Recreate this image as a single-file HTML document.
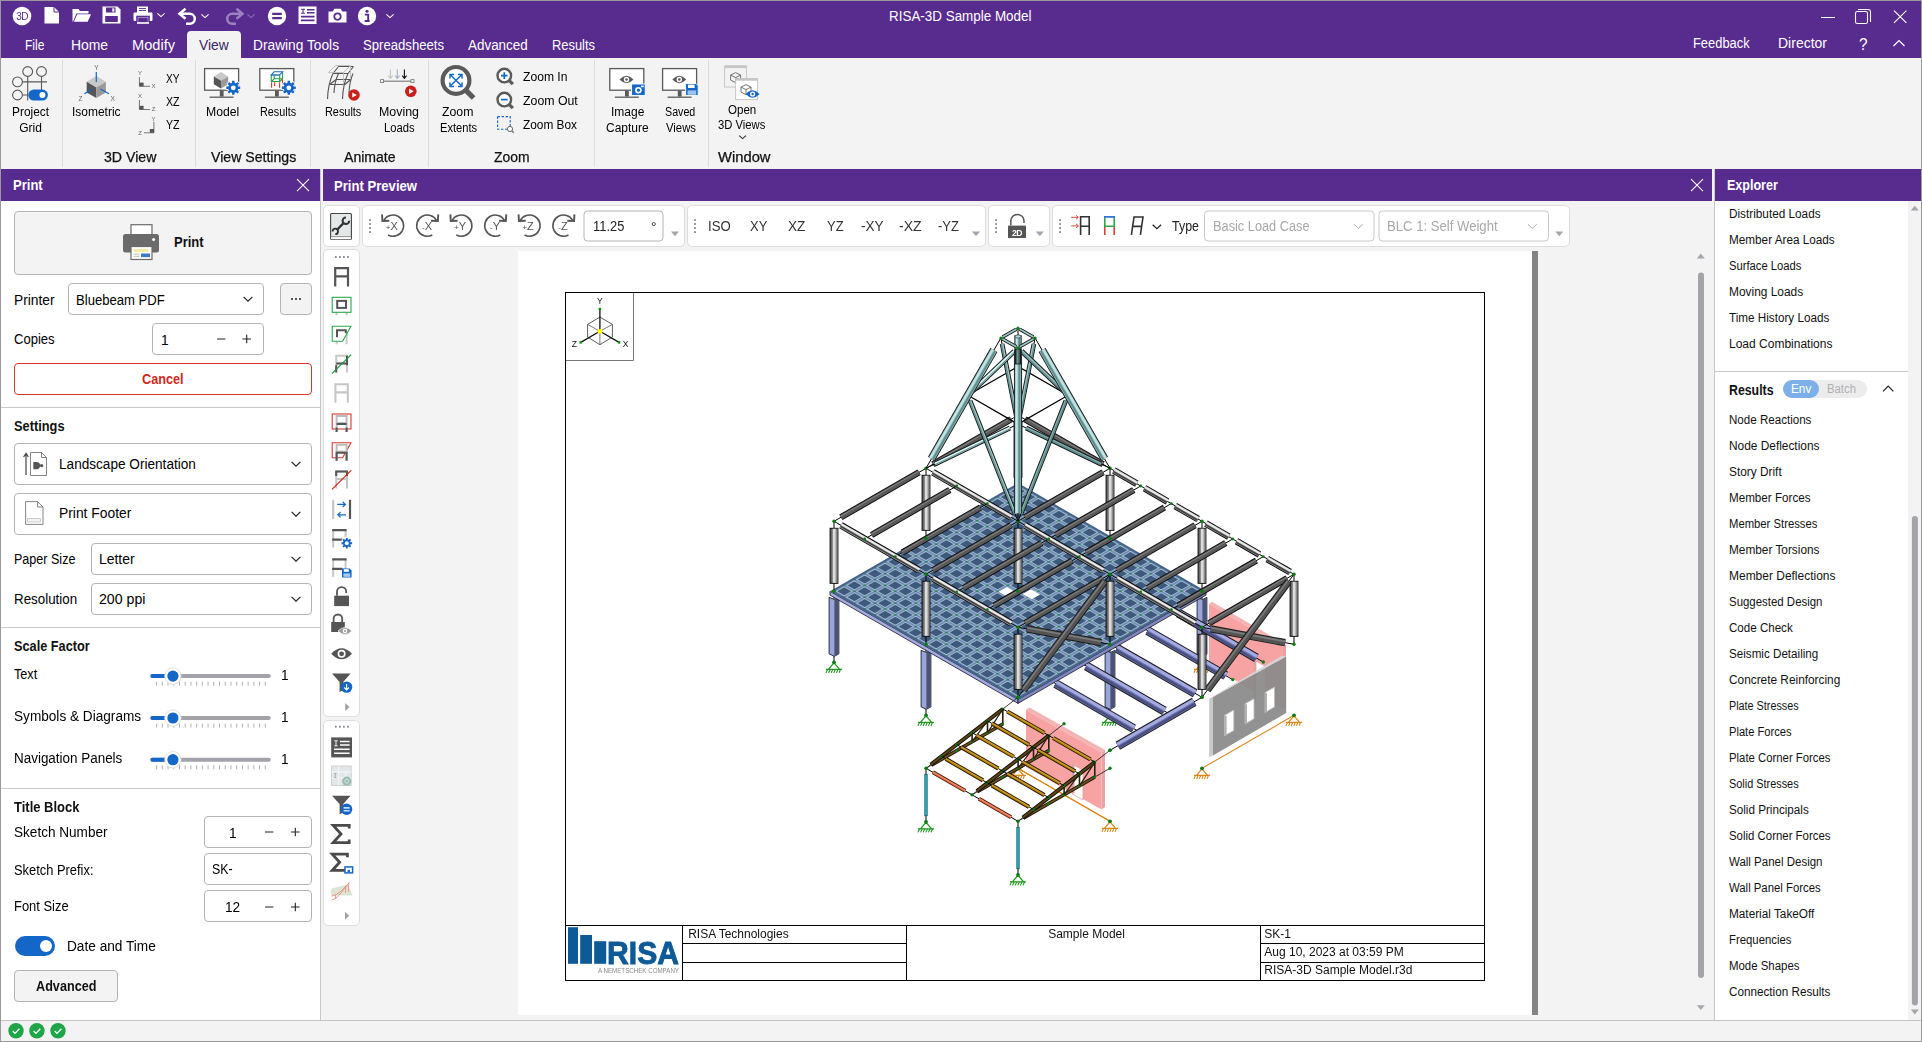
<!DOCTYPE html>
<html><head><meta charset="utf-8"><title>RISA-3D Sample Model</title><style>
html,body{margin:0;padding:0;}
body{width:1922px;height:1042px;overflow:hidden;background:#f3f3f3;position:relative;font-family:"Liberation Sans",sans-serif;}
.b{position:absolute;box-sizing:border-box;display:block;}
.t{position:absolute;white-space:nowrap;line-height:1;transform-origin:0 0;display:block;}
svg{overflow:visible;will-change:transform;}
svg text{font-family:"Liberation Sans",sans-serif;}
</style></head><body>
<div class="b" style="left:1px;top:1px;width:1920px;height:57px;background:#582c8f"></div>
<div class="b" style="left:187px;top:31px;width:54px;height:28px;background:#f3f3f3;border-radius:4px 4px 0 0"></div>
<svg class="b" style="left:12px;top:6px;" width="20" height="20" viewBox="0 0 20 20"><circle cx="10" cy="10" r="9.3" fill="#fff"/><text x="10" y="13.6" font-size="10" text-anchor="middle" fill="#582c8f" font-family="Liberation Sans, sans-serif" letter-spacing="-0.6">3D</text></svg>
<svg class="b" style="left:44px;top:6px;" width="16" height="18" viewBox="0 0 16 18"><path d="M0.5 1h9.5l5 5v11.5h-14.5z" fill="#fff"/><path d="M10 1v5h5" fill="none" stroke="#582c8f" stroke-width="1"/></svg>
<svg class="b" style="left:72px;top:8px;" width="20" height="15" viewBox="0 0 20 15"><path d="M0.5 13.5v-12.5h6l1.5 2h8.5v2.5h-12l-3.5 8z" fill="#fff"/><path d="M5.3 6.3h13.7l-3.3 7.5h-13.9z" fill="#fff"/></svg>
<svg class="b" style="left:102px;top:6px;" width="19" height="18" viewBox="0 0 19 18"><path d="M0.5 0.5h15l3 3v14h-18z" fill="#fff"/><rect x="4" y="1.5" width="9.5" height="5" fill="#582c8f"/><rect x="10.3" y="2.3" width="2" height="3.4" fill="#fff"/><rect x="3.2" y="10" width="12.6" height="6" fill="#582c8f"/></svg>
<svg class="b" style="left:133px;top:6px;" width="20" height="18" viewBox="0 0 20 18"><rect x="4" y="0.5" width="11" height="7" fill="#fff"/><path d="M6 2.5h7M6 4.5h7" stroke="#582c8f" stroke-width="0.9"/><rect x="0.5" y="6.5" width="19" height="8.5" rx="1.2" fill="#fff"/><rect x="4" y="10.5" width="12" height="7" fill="#fff" stroke="#582c8f" stroke-width="1.6"/><rect x="5.2" y="11.6" width="9.6" height="5.2" fill="#582c8f"/><rect x="4" y="16.2" width="12" height="1.6" fill="#fff"/></svg>
<svg class="b" style="left:155.3px;top:9.3px;" width="12" height="12" viewBox="0 0 12 12"><path d="M2.4 4.4L6 7.6L9.6 4.4" fill="none" stroke="#fff" stroke-width="1.1"/></svg>
<svg class="b" style="left:178px;top:8px;" width="20" height="18" viewBox="0 0 20 18"><path d="M7.5 0.8L1.5 5.8l6 5" fill="none" stroke="#fff" stroke-width="2.5"/><path d="M2.5 5.8h9.3a5 5 0 0 1 0 10h-3.8" fill="none" stroke="#fff" stroke-width="2.5"/></svg>
<svg class="b" style="left:199.3px;top:10.3px;" width="12" height="12" viewBox="0 0 12 12"><path d="M2.4 4.4L6 7.6L9.6 4.4" fill="none" stroke="#fff" stroke-width="1.1"/></svg>
<svg class="b" style="left:224px;top:8px;" width="20" height="18" viewBox="0 0 20 18"><path d="M12.5 0.8l6 5l-6 5" fill="none" stroke="#9b82bf" stroke-width="2.5"/><path d="M17.5 5.8h-9.3a5 5 0 0 0 0 10h3.8" fill="none" stroke="#9b82bf" stroke-width="2.5"/></svg>
<svg class="b" style="left:245.3px;top:10.3px;" width="12" height="12" viewBox="0 0 12 12"><path d="M2.4 4.4L6 7.6L9.6 4.4" fill="none" stroke="#8a70b2" stroke-width="1.1"/></svg>
<svg class="b" style="left:267px;top:6px;" width="20" height="20" viewBox="0 0 20 20"><circle cx="10" cy="10" r="9.2" fill="#fff"/><path d="M5.2 7.8h9.6M5.2 12.2h9.6" stroke="#582c8f" stroke-width="2.2"/></svg>
<svg class="b" style="left:298px;top:6px;" width="19" height="19" viewBox="0 0 19 19"><rect x="0.5" y="0.5" width="18" height="17.5" fill="#fff"/><path d="M3 3.2h4M3 7.2h4M5 3.2v4" stroke="#582c8f" stroke-width="1.1"/><path d="M9 3.8h7.5M9 6.8h7.5M3 10.6h13.5M3 14.4h13.5" stroke="#582c8f" stroke-width="1.6"/></svg>
<svg class="b" style="left:328px;top:8px;" width="19" height="15" viewBox="0 0 19 15"><path d="M0.5 3.5h4.2l1.6-2.8h6.4l1.6 2.8h4.2v11h-18z" fill="#fff"/><circle cx="9.5" cy="8.6" r="4.1" fill="#582c8f"/><circle cx="9.5" cy="8.6" r="2.3" fill="#fff"/></svg>
<svg class="b" style="left:357px;top:6px;" width="20" height="20" viewBox="0 0 20 20"><circle cx="10" cy="10" r="9.2" fill="#fff"/><circle cx="10" cy="5.3" r="1.5" fill="#582c8f"/><path d="M7.8 8.6h3.4v6.2M7.6 15h5" stroke="#582c8f" stroke-width="1.9" fill="none"/></svg>
<svg class="b" style="left:384.3px;top:10px;" width="12" height="12" viewBox="0 0 12 12"><path d="M2.4 4.4L6 7.6L9.6 4.4" fill="none" stroke="#fff" stroke-width="1.1"/></svg>
<span class="t" style="left:889.0px;top:9.1px;font-size:14px;color:#fff;transform:scaleX(0.9588);">RISA-3D Sample Model</span>
<svg class="b" style="left:1818px;top:8px;" width="20" height="18" viewBox="0 0 20 18"><path d="M3 9.5h14" stroke="#fff" stroke-width="1"/></svg>
<svg class="b" style="left:1853px;top:7px;" width="20" height="18" viewBox="0 0 20 18"><rect x="2.5" y="4.5" width="12" height="12" rx="1.8" fill="none" stroke="#fff" stroke-width="1.1"/><path d="M5 2.5h10.2a2.3 2.3 0 0 1 2.3 2.3v10.2" fill="none" stroke="#fff" stroke-width="1.1"/></svg>
<svg class="b" style="left:1890px;top:7px;" width="20" height="18" viewBox="0 0 20 18"><path d="M4 3.7l12.4 12.2M16.4 3.7l-12.4 12.2" stroke="#fff" stroke-width="1.1"/></svg>
<span class="t" style="left:25.3px;top:38.4px;font-size:14px;color:#fff;transform:scaleX(0.8601);">File</span>
<span class="t" style="left:71.3px;top:38.4px;font-size:14px;color:#fff;transform:scaleX(0.9908);">Home</span>
<span class="t" style="left:132.3px;top:38.4px;font-size:14px;color:#fff;transform:scaleX(1.0428);">Modify</span>
<span class="t" style="left:199.3px;top:38.4px;font-size:14px;color:#3d2466;transform:scaleX(0.9870);">View</span>
<span class="t" style="left:253.3px;top:38.4px;font-size:14px;color:#fff;transform:scaleX(0.9810);">Drawing Tools</span>
<span class="t" style="left:363.3px;top:38.4px;font-size:14px;color:#fff;transform:scaleX(0.9376);">Spreadsheets</span>
<span class="t" style="left:468.3px;top:38.4px;font-size:14px;color:#fff;transform:scaleX(0.9588);">Advanced</span>
<span class="t" style="left:552.3px;top:38.4px;font-size:14px;color:#fff;transform:scaleX(0.9212);">Results</span>
<span class="t" style="left:1693.3px;top:36.4px;font-size:14px;color:#fff;transform:scaleX(0.9207);">Feedback</span>
<span class="t" style="left:1778.2px;top:36.4px;font-size:14px;color:#fff;transform:scaleX(0.9998);">Director</span>
<span class="t" style="left:1858.7px;top:35.6px;font-size:17px;color:#fff;transform:scaleX(0.9000);">?</span>
<svg class="b" style="left:1892px;top:37px;" width="14" height="12" viewBox="0 0 14 12"><path d="M1.5 9L7 3.5L12.5 9" fill="none" stroke="#fff" stroke-width="1.2"/></svg>
<div class="b" style="left:1px;top:58px;width:1920px;height:110.5px;background:#f3f3f3"></div>
<div class="b" style="left:62px;top:60px;width:1px;height:107px;background:#dcdcdc"></div>
<div class="b" style="left:195px;top:60px;width:1px;height:107px;background:#dcdcdc"></div>
<div class="b" style="left:310px;top:60px;width:1px;height:107px;background:#dcdcdc"></div>
<div class="b" style="left:428px;top:60px;width:1px;height:107px;background:#dcdcdc"></div>
<div class="b" style="left:594px;top:60px;width:1px;height:107px;background:#dcdcdc"></div>
<div class="b" style="left:708px;top:60px;width:1px;height:107px;background:#dcdcdc"></div>
<svg class="b" style="left:0px;top:0px;" width="800" height="170" viewBox="0 0 800 170"><g fill="none" stroke="#5a5a5a" stroke-width="1.1"><circle cx="27.7" cy="71.5" r="4.9"/><circle cx="41.5" cy="71.5" r="4.9"/><circle cx="17.5" cy="81.9" r="4.9"/><circle cx="17.5" cy="95" r="4.9"/><path d="M27.7 76.4V100.5M41.5 76.4V90M22.4 81.9H47M22.4 95H28.5"/></g><rect x="28.3" y="89.6" width="19.6" height="11" rx="5.5" fill="#1467c8"/><circle cx="42.4" cy="95.1" r="3" fill="#fff"/><polygon points="96.3,76.0 105.9,81.8 96.3,87.6 86.7,81.8" fill="#c9c9c9"/><polygon points="86.7,81.8 96.3,87.6 96.3,98.1 86.7,92.4" fill="#555"/><polygon points="96.3,87.6 105.9,81.8 105.9,92.4 96.3,98.1" fill="#9a9a9a"/><path d="M96.3 71.9V81.9M92.4 89L84.4 93.8M100.4 89L109 93.8" stroke="#1467c8" stroke-width="1.2"/><text x="96.3" y="70.3" font-size="6.5" fill="#666" text-anchor="middle" font-family="Liberation Sans, sans-serif">Y</text><text x="80.6" y="101" font-size="6.5" fill="#666" text-anchor="middle" font-family="Liberation Sans, sans-serif">Z</text><text x="112.6" y="101" font-size="6.5" fill="#666" text-anchor="middle" font-family="Liberation Sans, sans-serif">X</text><g stroke="#777" stroke-width="1" fill="none"><path d="M139.4 77V86.3H150"/><path d="M139.4 100V109.5H150"/><path d="M153.9 121.8V132.8H144"/></g><rect x="139.4" y="82.6" width="4.2" height="3.7" fill="#555"/><rect x="139.4" y="105.8" width="4.2" height="3.7" fill="#555"/><rect x="149.8" y="129" width="4.2" height="3.8" fill="#555"/><text x="140" y="75.2" font-size="6" fill="#666" text-anchor="middle" font-family="Liberation Sans, sans-serif">Y</text><text x="153.6" y="88.2" font-size="6" fill="#666" text-anchor="middle" font-family="Liberation Sans, sans-serif">X</text><text x="140" y="98.3" font-size="6" fill="#666" text-anchor="middle" font-family="Liberation Sans, sans-serif">X</text><text x="153.6" y="111.3" font-size="6" fill="#666" text-anchor="middle" font-family="Liberation Sans, sans-serif">Z</text><text x="153.6" y="120.5" font-size="6" fill="#666" text-anchor="middle" font-family="Liberation Sans, sans-serif">Y</text><text x="140" y="134.8" font-size="6" fill="#666" text-anchor="middle" font-family="Liberation Sans, sans-serif">Z</text><rect x="204.6" y="68.6" width="34" height="21.6" fill="#fff" stroke="#5a5a5a" stroke-width="1.3"/><rect x="219.79999999999998" y="90.6" width="3.8" height="6" fill="#5a5a5a"/><path d="M209.6 97.2h24" stroke="#5a5a5a" stroke-width="1.3"/><polygon points="221.0,72.1 228.2,76.4 221.0,80.7 213.8,76.4" fill="#c9c9c9"/><polygon points="213.8,76.4 221.0,80.7 221.0,88.6 213.8,84.3" fill="#555"/><polygon points="221.0,80.7 228.2,76.4 228.2,84.3 221.0,88.6" fill="#9a9a9a"/><path d="M240.29 86.58L240.29 89.02L238.25 89.07L237.70 90.40L239.11 91.88L237.38 93.61L235.90 92.20L234.57 92.75L234.52 94.79L232.08 94.79L232.03 92.75L230.70 92.20L229.22 93.61L227.49 91.88L228.90 90.40L228.35 89.07L226.31 89.02L226.31 86.58L228.35 86.53L228.90 85.20L227.49 83.72L229.22 81.99L230.70 83.40L232.03 82.85L232.08 80.81L234.52 80.81L234.57 82.85L235.90 83.40L237.38 81.99L239.11 83.72L237.70 85.20L238.25 86.53Z" fill="#1467c8" stroke="#fff" stroke-width="1.6" paint-order="stroke"/><circle cx="233.3" cy="87.8" r="2.4" fill="#fff"/><rect x="259.8" y="68.6" width="34" height="21.6" fill="#fff" stroke="#5a5a5a" stroke-width="1.3"/><rect x="275.0" y="90.6" width="3.8" height="6" fill="#5a5a5a"/><path d="M264.8 97.2h24" stroke="#5a5a5a" stroke-width="1.3"/><g fill="none" stroke-width="1.1"><path d="M274.2 72.2h8.4v6.6h-8.4zM271.3 74.9h8.4v6.6h-8.4zM271.3 81.5l2.9-2.7M279.7 81.5l2.9-2.7" stroke="#2aa04a"/><path d="M271.3 74.9l2.9-3.1h8.4l-2.9 3.1z" stroke="#2d6fd0" fill="#fff"/><path d="M271.6 82.3v5.4M274.6 82.3v3.6M279.6 82.3v5.4M282.5 79.6v4.6" stroke="#d63a2f"/></g><path d="M295.79 86.58L295.79 89.02L293.75 89.07L293.20 90.40L294.61 91.88L292.88 93.61L291.40 92.20L290.07 92.75L290.02 94.79L287.58 94.79L287.53 92.75L286.20 92.20L284.72 93.61L282.99 91.88L284.40 90.40L283.85 89.07L281.81 89.02L281.81 86.58L283.85 86.53L284.40 85.20L282.99 83.72L284.72 81.99L286.20 83.40L287.53 82.85L287.58 80.81L290.02 80.81L290.07 82.85L291.40 83.40L292.88 81.99L294.61 83.72L293.20 85.20L293.75 86.53Z" fill="#1467c8" stroke="#fff" stroke-width="1.6" paint-order="stroke"/><circle cx="288.8" cy="87.8" r="2.4" fill="#fff"/><g fill="none" stroke="#555" stroke-width="1.1"><path d="M327.5 99c0.3-9 1.5-17 5.5-25.5M334 93c0.3-7 1.2-12.5 4.5-19.5M342.5 99c0.3-9 1.5-17 5.5-25.5M349 93c0.3-7 1-12.5 4-19.5"/><path d="M333 73.5h15M338.5 66.5h15M333 73.5l5.5-7M348 73.5l5.5-7M329.8 84.5h15.2M336 79.5h14.5M329.8 84.5l6.2-5M345 84.5l5.5-5"/></g><g fill="none" stroke="#bbb" stroke-width="0.9"><path d="M328.5 72.5h15v12M328.5 72.5l7-7h15l-7 7M350.5 65.5v12"/></g><circle cx="354" cy="95" r="5.8" fill="#c8201c"/><path d="M352.3 92.4L356.8 95L352.3 97.6Z" fill="#fff"/><path d="M382 81.2h30.5" stroke="#777" stroke-width="1.1"/><rect x="380.6" y="79.6" width="3" height="3" fill="#f3f3f3" stroke="#777" stroke-width="0.8"/><rect x="411" y="79.6" width="3" height="3" fill="#f3f3f3" stroke="#777" stroke-width="0.8"/><path d="M390.4 69.5V78M388.2 75.6L390.4 78.4L392.59999999999997 75.6" stroke="#c4c4c8" stroke-width="1.1" fill="none"/><path d="M397.3 69.5V78M395.1 75.6L397.3 78.4L399.5 75.6" stroke="#a9afc4" stroke-width="1.1" fill="none"/><path d="M404.4 69.5V78M402.2 75.6L404.4 78.4L406.59999999999997 75.6" stroke="#111" stroke-width="1.1" fill="none"/><circle cx="410.8" cy="91.3" r="5.8" fill="#c8201c"/><path d="M409.1 88.7L413.6 91.3L409.1 93.89999999999999Z" fill="#fff"/><circle cx="456" cy="80.4" r="13.4" fill="#fff" stroke="#5a5a5a" stroke-width="4.2"/><path d="M466.2 90.6L473.6 98.0" stroke="#5a5a5a" stroke-width="5.25"/><g stroke="#1467c8" stroke-width="1.5" fill="none"><path d="M450.6 75L461.4 85.8M461.4 75L450.6 85.8"/><path d="M450 78.4V74.4H454M458 74.4H462V78.4M462 82.4V86.4H458M454 86.4H450V82.4"/></g><circle cx="504.3" cy="75.6" r="6.8" fill="#fff" stroke="#5a5a5a" stroke-width="2.4"/><path d="M509.5 80.8L512.9 84.2" stroke="#5a5a5a" stroke-width="3.2"/><path d="M501 75.6h6.6M504.3 72.3v6.6" stroke="#1467c8" stroke-width="1.7"/><circle cx="504.3" cy="99.6" r="6.8" fill="#fff" stroke="#5a5a5a" stroke-width="2.4"/><path d="M509.5 104.8L512.9 108.2" stroke="#5a5a5a" stroke-width="3.2"/><path d="M501 99.6h6.6" stroke="#1467c8" stroke-width="1.7"/><rect x="497.6" y="116.6" width="12.6" height="12.6" fill="none" stroke="#1467c8" stroke-width="1.1" stroke-dasharray="2.4 1.6"/><circle cx="510" cy="129" r="2.6" fill="#fff" stroke="#666" stroke-width="1"/><path d="M512.0 131.0L513.7 132.7" stroke="#666" stroke-width="1.25"/><rect x="609.8" y="68.6" width="34" height="21.6" fill="#fff" stroke="#5a5a5a" stroke-width="1.3"/><rect x="625.0" y="90.6" width="3.8" height="6" fill="#5a5a5a"/><path d="M614.8 97.2h24" stroke="#5a5a5a" stroke-width="1.3"/><path d="M619.5 79.5q7 -7.4 14 0q-7 7.4 -14 0z" fill="#5a5a5a"/><circle cx="626.5" cy="79.5" r="2.7" fill="#fff"/><circle cx="626.5" cy="79.5" r="1.3" fill="#5a5a5a"/><rect x="631.6" y="84" width="13.6" height="11.4" fill="#1467c8" stroke="#fff" stroke-width="0.9"/><circle cx="638.4" cy="90.2" r="3.3" fill="#fff"/><circle cx="638.4" cy="90.2" r="1.6" fill="#1467c8"/><rect x="641" y="85.6" width="2.8" height="1.6" fill="#fff"/><rect x="662.6" y="68.6" width="34" height="21.6" fill="#fff" stroke="#5a5a5a" stroke-width="1.3"/><rect x="677.8000000000001" y="90.6" width="3.8" height="6" fill="#5a5a5a"/><path d="M667.6 97.2h24" stroke="#5a5a5a" stroke-width="1.3"/><path d="M672.3 79.5q7 -7.4 14 0q-7 7.4 -14 0z" fill="#5a5a5a"/><circle cx="679.3" cy="79.5" r="2.7" fill="#fff"/><circle cx="679.3" cy="79.5" r="1.3" fill="#5a5a5a"/><path d="M685.6 83.5h10.4l2.2 2.2v9.8h-12.6z" fill="#1467c8" stroke="#fff" stroke-width="0.9"/><rect x="688" y="84.6" width="6.6" height="3.4" fill="#fff"/><rect x="687.6" y="90.4" width="8.6" height="4.4" fill="#9cc3ee"/><rect x="724.6" y="66" width="22" height="21" fill="#f3f3f3" stroke="#c6c6c6" stroke-width="1"/><rect x="724.6" y="65.5" width="22" height="2.6" fill="#c6c6c6"/><g fill="none" stroke="#666" stroke-width="0.9"><path d="M735.6 72.6l5 2.5v5l-5 2.5l-5 -2.5v-5z"/><path d="M730.6 75.1l5 2.5l5 -2.5M735.6 77.6v5"/></g><rect x="735.6" y="78.6" width="22" height="21" fill="#fff" stroke="#c6c6c6" stroke-width="1"/><rect x="735.6" y="78.1" width="22" height="2.6" fill="#c6c6c6"/><g fill="none" stroke="#666" stroke-width="0.9"><path d="M746 84.6l5 2.5v5l-5 2.5l-5 -2.5v-5z"/><path d="M741 87.1l5 2.5l5 -2.5M746 89.6v5"/></g><path d="M745.6 94q7 -7.4 14 0q-7 7.4 -14 0z" fill="#1467c8"/><circle cx="752.6" cy="94" r="2.6" fill="#fff"/><circle cx="752.6" cy="94" r="1.2" fill="#1467c8"/><path d="M739.2 135.6l3.4 3l3.4 -3" fill="none" stroke="#333" stroke-width="1.1"/></svg>
<span class="t" style="left:12.0px;top:105.5px;font-size:12px;color:#000;transform:scaleX(0.9905);">Project</span>
<span class="t" style="left:19.2px;top:121.5px;font-size:12px;color:#000;transform:scaleX(1.0000);">Grid</span>
<span class="t" style="left:72.0px;top:105.5px;font-size:12px;color:#000;transform:scaleX(0.9983);">Isometric</span>
<span class="t" style="left:206.3px;top:105.5px;font-size:12px;color:#000;transform:scaleX(1.0186);">Model</span>
<span class="t" style="left:259.6px;top:105.5px;font-size:12px;color:#000;transform:scaleX(0.9020);">Results</span>
<span class="t" style="left:325.4px;top:105.6px;font-size:12px;color:#000;transform:scaleX(0.9070);">Results</span>
<span class="t" style="left:378.6px;top:105.6px;font-size:12px;color:#000;transform:scaleX(1.0338);">Moving</span>
<span class="t" style="left:383.5px;top:121.5px;font-size:12px;color:#000;transform:scaleX(0.9357);">Loads</span>
<span class="t" style="left:442.0px;top:105.6px;font-size:12px;color:#000;transform:scaleX(1.0235);">Zoom</span>
<span class="t" style="left:439.5px;top:121.5px;font-size:12px;color:#000;transform:scaleX(0.9294);">Extents</span>
<span class="t" style="left:610.6px;top:105.6px;font-size:12px;color:#000;transform:scaleX(1.0012);">Image</span>
<span class="t" style="left:606.0px;top:121.5px;font-size:12px;color:#000;transform:scaleX(0.9976);">Capture</span>
<span class="t" style="left:665.4px;top:105.6px;font-size:12px;color:#000;transform:scaleX(0.8904);">Saved</span>
<span class="t" style="left:666.0px;top:121.5px;font-size:12px;color:#000;transform:scaleX(0.9434);">Views</span>
<span class="t" style="left:728.4px;top:104.0px;font-size:12px;color:#000;transform:scaleX(0.9638);">Open</span>
<span class="t" style="left:718.0px;top:119.0px;font-size:12px;color:#000;transform:scaleX(0.9370);">3D Views</span>
<span class="t" style="left:166.2px;top:72.5px;font-size:12px;color:#000;transform:scaleX(0.8496);">XY</span>
<span class="t" style="left:166.2px;top:95.5px;font-size:12px;color:#000;transform:scaleX(0.8868);">XZ</span>
<span class="t" style="left:166.2px;top:118.5px;font-size:12px;color:#000;transform:scaleX(0.8868);">YZ</span>
<span class="t" style="left:523.0px;top:71.2px;font-size:12px;color:#000;transform:scaleX(1.0107);">Zoom In</span>
<span class="t" style="left:523.0px;top:95.3px;font-size:12px;color:#000;transform:scaleX(1.0269);">Zoom Out</span>
<span class="t" style="left:523.0px;top:119.4px;font-size:12px;color:#000;transform:scaleX(0.9873);">Zoom Box</span>
<span class="t" style="left:103.6px;top:149.8px;font-size:14px;color:#111;transform:scaleX(1.0101);-webkit-text-stroke:0.25px #111;">3D View</span>
<span class="t" style="left:210.9px;top:149.8px;font-size:14px;color:#111;transform:scaleX(1.0075);-webkit-text-stroke:0.25px #111;">View Settings</span>
<span class="t" style="left:344.4px;top:149.8px;font-size:14px;color:#111;transform:scaleX(1.0047);-webkit-text-stroke:0.25px #111;">Animate</span>
<span class="t" style="left:494.0px;top:149.8px;font-size:14px;color:#111;transform:scaleX(0.9920);-webkit-text-stroke:0.25px #111;">Zoom</span>
<span class="t" style="left:717.5px;top:149.8px;font-size:14px;color:#111;transform:scaleX(1.0544);-webkit-text-stroke:0.25px #111;">Window</span>
<div class="b" style="left:1px;top:169px;width:320px;height:851px;background:#fff;border-right:1px solid #c8c8c8"></div>
<div class="b" style="left:1px;top:169px;width:319px;height:32px;background:#582c8f"></div>
<span class="t" style="left:13.3px;top:177.9px;font-size:14px;color:#fff;transform:scaleX(0.9312);font-weight:bold;">Print</span>
<svg class="b" style="left:296px;top:178px;" width="14" height="14" viewBox="0 0 14 14"><path d="M1 1.2l12 12M13 1.2l-12 12" stroke="#fff" stroke-width="1.1"/></svg>
<div class="b" style="left:14px;top:211px;width:298px;height:64px;background:#f3f3f3;border:1px solid #b4b4b4;border-radius:4px"></div>
<svg class="b" style="left:123.3px;top:224px;" width="36" height="36" viewBox="0 0 36 36"><rect x="8" y="0.7" width="21" height="10" fill="#fff" stroke="#6b6b6b" stroke-width="1.2"/><rect x="0" y="10" width="36" height="18.5" rx="2.5" fill="#6b6b6b"/><circle cx="30.6" cy="15.6" r="1.5" fill="#fff"/><rect x="8" y="22.5" width="21" height="13" fill="#fff" stroke="#6b6b6b" stroke-width="1.2"/><rect x="10.5" y="25" width="15" height="3" fill="#f2eda0"/><rect x="10.5" y="29.5" width="6" height="1" fill="#bbb"/><rect x="10.5" y="31.8" width="6" height="1" fill="#bbb"/><rect x="18" y="29.5" width="9" height="3.6" fill="#3b79c9"/></svg>
<span class="t" style="left:173.6px;top:235.4px;font-size:14px;color:#111;transform:scaleX(0.9281);font-weight:bold;">Print</span>
<span class="t" style="left:14.3px;top:292.7px;font-size:14px;color:#000;transform:scaleX(0.9845);">Printer</span>
<div class="b" style="left:68px;top:283px;width:196px;height:32px;background:#fff;border:1px solid #b4b4b4;border-radius:4px"></div>
<span class="t" style="left:76.2px;top:292.7px;font-size:14px;color:#000;transform:scaleX(0.9354);">Bluebeam PDF</span>
<svg class="b" style="left:240.8px;top:292.3px;" width="14" height="14" viewBox="0 0 14 14"><path d="M2.5999999999999996 4.9L7 9.1L11.4 4.9" fill="none" stroke="#222" stroke-width="1.2"/></svg>
<div class="b" style="left:280px;top:283px;width:32px;height:32px;background:#f3f3f3;border:1px solid #b4b4b4;border-radius:4px"></div>
<svg class="b" style="left:289px;top:296px;" width="14" height="6" viewBox="0 0 14 6"><circle cx="3" cy="3" r="1" fill="#222"/><circle cx="7" cy="3" r="1" fill="#222"/><circle cx="11" cy="3" r="1" fill="#222"/></svg>
<span class="t" style="left:14.3px;top:331.9px;font-size:14px;color:#000;transform:scaleX(0.9317);">Copies</span>
<div class="b" style="left:152px;top:323px;width:112px;height:32px;background:#fff;border:1px solid #b4b4b4;border-radius:4px"></div>
<span class="t" style="left:160.8px;top:332.6px;font-size:14px;color:#000;transform:scaleX(0.9750);">1</span>
<svg class="b" style="left:215px;top:333px;" width="40" height="12" viewBox="0 0 40 12"><path d="M2 6h8.4M27.4 6h8.6M31.7 1.7v8.6" stroke="#222" stroke-width="1.1"/></svg>
<div class="b" style="left:14px;top:363px;width:298px;height:32px;background:#fff;border:1px solid #d9362b;border-radius:4px"></div>
<span class="t" style="left:142.2px;top:371.8px;font-size:14px;color:#d3271c;transform:scaleX(0.9062);font-weight:bold;">Cancel</span>
<div class="b" style="left:1px;top:407.2px;width:319px;height:1px;background:#c8c8c8"></div>
<span class="t" style="left:14.3px;top:419.1px;font-size:14px;color:#111;transform:scaleX(0.9144);font-weight:bold;">Settings</span>
<div class="b" style="left:14px;top:443px;width:298px;height:42px;background:#fff;border:1px solid #b4b4b4;border-radius:4px"></div>
<svg class="b" style="left:22.5px;top:450.5px;" width="26" height="26" viewBox="0 0 26 26"><path d="M3 3v21M0.6 6L3 2.4L5.4 6" stroke="#444" stroke-width="1.2" fill="none"/><path d="M7.5 1.5h11l5 5v18h-16z" fill="#fff" stroke="#777" stroke-width="0.9"/><path d="M18.5 1.5v5h5" fill="none" stroke="#777" stroke-width="0.9"/><path d="M10.3 11h3.2a3.6 3.6 0 0 1 0 7.2h-3.2z" fill="#555"/><circle cx="18.6" cy="14.6" r="1.7" fill="#555"/></svg>
<span class="t" style="left:58.5px;top:456.5px;font-size:14px;color:#000;transform:scaleX(0.9718);">Landscape Orientation</span>
<svg class="b" style="left:288.7px;top:457px;" width="14" height="14" viewBox="0 0 14 14"><path d="M2.5999999999999996 4.9L7 9.1L11.4 4.9" fill="none" stroke="#222" stroke-width="1.2"/></svg>
<div class="b" style="left:14px;top:493px;width:298px;height:42px;background:#fff;border:1px solid #b4b4b4;border-radius:4px"></div>
<svg class="b" style="left:25px;top:501.3px;" width="19" height="24.5" viewBox="0 0 19 24.5"><path d="M0.6 0.6h12l5.4 5.4v17.4h-17.4z" fill="#fff" stroke="#777" stroke-width="0.9"/><path d="M12.6 0.6v5.4h5.4" fill="none" stroke="#777" stroke-width="0.9"/><rect x="2.6" y="17.4" width="13" height="3.6" fill="#f3f3f3" stroke="#bbb" stroke-width="0.7"/></svg>
<span class="t" style="left:58.5px;top:506.1px;font-size:14px;color:#000;transform:scaleX(0.9885);">Print Footer</span>
<svg class="b" style="left:288.7px;top:507px;" width="14" height="14" viewBox="0 0 14 14"><path d="M2.5999999999999996 4.9L7 9.1L11.4 4.9" fill="none" stroke="#222" stroke-width="1.2"/></svg>
<span class="t" style="left:14.3px;top:551.8px;font-size:14px;color:#000;transform:scaleX(0.8966);">Paper Size</span>
<div class="b" style="left:91px;top:543px;width:221px;height:32px;background:#fff;border:1px solid #b4b4b4;border-radius:4px"></div>
<span class="t" style="left:99.4px;top:551.8px;font-size:14px;color:#000;transform:scaleX(0.9944);">Letter</span>
<svg class="b" style="left:288.7px;top:552px;" width="14" height="14" viewBox="0 0 14 14"><path d="M2.5999999999999996 4.9L7 9.1L11.4 4.9" fill="none" stroke="#222" stroke-width="1.2"/></svg>
<span class="t" style="left:14.3px;top:591.9px;font-size:14px;color:#000;transform:scaleX(0.9540);">Resolution</span>
<div class="b" style="left:91px;top:583px;width:221px;height:32px;background:#fff;border:1px solid #b4b4b4;border-radius:4px"></div>
<span class="t" style="left:99.4px;top:591.9px;font-size:14px;color:#000;transform:scaleX(1.0103);">200 ppi</span>
<svg class="b" style="left:288.7px;top:592.3px;" width="14" height="14" viewBox="0 0 14 14"><path d="M2.5999999999999996 4.9L7 9.1L11.4 4.9" fill="none" stroke="#222" stroke-width="1.2"/></svg>
<div class="b" style="left:1px;top:627.2px;width:319px;height:1px;background:#c8c8c8"></div>
<span class="t" style="left:14.3px;top:639.1px;font-size:14px;color:#111;transform:scaleX(0.9092);font-weight:bold;">Scale Factor</span>
<span class="t" style="left:14.3px;top:667.3px;font-size:14px;color:#000;transform:scaleX(0.9036);">Text</span>
<svg class="b" style="left:0px;top:0px;" width="320" height="1042" viewBox="0 0 320 1042"><rect x="150.4" y="674.1" width="120.4" height="4" rx="2" fill="#a3a3a9"/><rect x="150.4" y="674.1" width="22" height="4" rx="2" fill="#1467c8"/><path d="M156.60 681.7v4M162.32 681.7v4M168.04 681.7v4M173.76 681.7v4M179.48 681.7v4M185.21 681.7v4M190.93 681.7v4M196.65 681.7v4M202.37 681.7v4M208.09 681.7v4M213.81 681.7v4M219.53 681.7v4M225.25 681.7v4M230.97 681.7v4M236.69 681.7v4M242.42 681.7v4M248.14 681.7v4M253.86 681.7v4M259.58 681.7v4M265.30 681.7v4" stroke="#9a9aa0" stroke-width="0.8"/><circle cx="172.9" cy="676.1" r="8.2" fill="#fff" stroke="#d8d8d8" stroke-width="0.8"/><circle cx="172.9" cy="676.1" r="5.6" fill="#1467c8"/></svg>
<span class="t" style="left:281.2px;top:667.8px;font-size:14px;color:#000;transform:scaleX(0.9750);">1</span>
<span class="t" style="left:14.3px;top:709.4px;font-size:14px;color:#000;transform:scaleX(0.9724);">Symbols &amp; Diagrams</span>
<svg class="b" style="left:0px;top:0px;" width="320" height="1042" viewBox="0 0 320 1042"><rect x="150.4" y="716" width="120.4" height="4" rx="2" fill="#a3a3a9"/><rect x="150.4" y="716" width="22" height="4" rx="2" fill="#1467c8"/><path d="M156.60 723.6v4M162.32 723.6v4M168.04 723.6v4M173.76 723.6v4M179.48 723.6v4M185.21 723.6v4M190.93 723.6v4M196.65 723.6v4M202.37 723.6v4M208.09 723.6v4M213.81 723.6v4M219.53 723.6v4M225.25 723.6v4M230.97 723.6v4M236.69 723.6v4M242.42 723.6v4M248.14 723.6v4M253.86 723.6v4M259.58 723.6v4M265.30 723.6v4" stroke="#9a9aa0" stroke-width="0.8"/><circle cx="172.9" cy="718" r="8.2" fill="#fff" stroke="#d8d8d8" stroke-width="0.8"/><circle cx="172.9" cy="718" r="5.6" fill="#1467c8"/></svg>
<span class="t" style="left:281.2px;top:709.9px;font-size:14px;color:#000;transform:scaleX(0.9750);">1</span>
<span class="t" style="left:14.3px;top:751.2px;font-size:14px;color:#000;transform:scaleX(0.9598);">Navigation Panels</span>
<svg class="b" style="left:0px;top:0px;" width="320" height="1042" viewBox="0 0 320 1042"><rect x="150.4" y="757.7" width="120.4" height="4" rx="2" fill="#a3a3a9"/><rect x="150.4" y="757.7" width="22" height="4" rx="2" fill="#1467c8"/><path d="M156.60 765.3000000000001v4M162.32 765.3000000000001v4M168.04 765.3000000000001v4M173.76 765.3000000000001v4M179.48 765.3000000000001v4M185.21 765.3000000000001v4M190.93 765.3000000000001v4M196.65 765.3000000000001v4M202.37 765.3000000000001v4M208.09 765.3000000000001v4M213.81 765.3000000000001v4M219.53 765.3000000000001v4M225.25 765.3000000000001v4M230.97 765.3000000000001v4M236.69 765.3000000000001v4M242.42 765.3000000000001v4M248.14 765.3000000000001v4M253.86 765.3000000000001v4M259.58 765.3000000000001v4M265.30 765.3000000000001v4" stroke="#9a9aa0" stroke-width="0.8"/><circle cx="172.9" cy="759.7" r="8.2" fill="#fff" stroke="#d8d8d8" stroke-width="0.8"/><circle cx="172.9" cy="759.7" r="5.6" fill="#1467c8"/></svg>
<span class="t" style="left:281.2px;top:751.7px;font-size:14px;color:#000;transform:scaleX(0.9750);">1</span>
<div class="b" style="left:1px;top:787.8px;width:319px;height:1px;background:#c8c8c8"></div>
<span class="t" style="left:14.3px;top:800.3px;font-size:14px;color:#111;transform:scaleX(0.9286);font-weight:bold;">Title Block</span>
<span class="t" style="left:14.3px;top:824.8px;font-size:14px;color:#000;transform:scaleX(0.9691);">Sketch Number</span>
<div class="b" style="left:204px;top:816px;width:108px;height:32px;background:#fff;border:1px solid #b4b4b4;border-radius:4px"></div>
<span class="t" style="left:229.0px;top:825.5px;font-size:14px;color:#000;transform:scaleX(0.9750);">1</span>
<svg class="b" style="left:262.5px;top:826.3px;" width="40" height="12" viewBox="0 0 40 12"><path d="M2 6h8.4M28 6h8.6M32.3 1.7v8.6" stroke="#222" stroke-width="1.1"/></svg>
<span class="t" style="left:14.3px;top:862.7px;font-size:14px;color:#000;transform:scaleX(0.9204);">Sketch Prefix:</span>
<div class="b" style="left:204px;top:853px;width:108px;height:32px;background:#fff;border:1px solid #b4b4b4;border-radius:4px"></div>
<span class="t" style="left:212.0px;top:862.4px;font-size:14px;color:#000;transform:scaleX(0.8825);">SK-</span>
<span class="t" style="left:14.3px;top:899.3px;font-size:14px;color:#000;transform:scaleX(0.9233);">Font Size</span>
<div class="b" style="left:204px;top:890px;width:108px;height:32px;background:#fff;border:1px solid #b4b4b4;border-radius:4px"></div>
<span class="t" style="left:225.4px;top:899.6px;font-size:14px;color:#000;transform:scaleX(0.9750);">12</span>
<svg class="b" style="left:262.5px;top:900.5px;" width="40" height="12" viewBox="0 0 40 12"><path d="M2 6h8.4M28 6h8.6M32.3 1.7v8.6" stroke="#222" stroke-width="1.1"/></svg>
<div class="b" style="left:15px;top:936.3px;width:40.2px;height:19.8px;background:#1467c8;border-radius:10px"></div>
<div class="b" style="left:39.9px;top:940.1px;width:12.2px;height:12.2px;background:#fff;border-radius:6.1px"></div>
<span class="t" style="left:67.2px;top:939.4px;font-size:14px;color:#000;transform:scaleX(0.9754);">Date and Time</span>
<div class="b" style="left:14px;top:970px;width:104px;height:32px;background:#f3f3f3;border:1px solid #b4b4b4;border-radius:4px"></div>
<span class="t" style="left:36.3px;top:979.3px;font-size:14px;color:#111;transform:scaleX(0.9028);font-weight:bold;">Advanced</span>
<div class="b" style="left:1px;top:1019.5px;width:1920px;height:1px;background:#c4c4c4"></div>
<svg class="b" style="left:0px;top:0px;" width="80" height="1042" viewBox="0 0 80 1042"><circle cx="16" cy="1030.8" r="7.7" fill="#1da548"/><path d="M12.7 1031.0l2.3 2.4l4.4 -4.6" fill="none" stroke="#fff" stroke-width="1.3"/><circle cx="36.9" cy="1030.8" r="7.7" fill="#1da548"/><path d="M33.6 1031.0l2.3 2.4l4.4 -4.6" fill="none" stroke="#fff" stroke-width="1.3"/><circle cx="58" cy="1030.8" r="7.7" fill="#1da548"/><path d="M54.7 1031.0l2.3 2.4l4.4 -4.6" fill="none" stroke="#fff" stroke-width="1.3"/></svg>
<div class="b" style="left:323px;top:169px;width:1389px;height:32px;background:#582c8f"></div>
<span class="t" style="left:334.0px;top:178.6px;font-size:14px;color:#fff;transform:scaleX(0.9356);font-weight:bold;">Print Preview</span>
<svg class="b" style="left:1690.2px;top:178px;" width="14" height="14" viewBox="0 0 14 14"><path d="M1 1.2l12 12M13 1.2l-12 12" stroke="#fff" stroke-width="1.1"/></svg>
<div class="b" style="left:323px;top:205px;width:37px;height:42px;background:#fff;border:1px solid #dedede;border-radius:5px"></div>
<div class="b" style="left:362px;top:205px;width:323px;height:42px;background:#fff;border:1px solid #dedede;border-radius:5px"></div>
<div class="b" style="left:687px;top:205px;width:299px;height:42px;background:#fff;border:1px solid #dedede;border-radius:5px"></div>
<div class="b" style="left:988px;top:205px;width:62px;height:42px;background:#fff;border:1px solid #dedede;border-radius:5px"></div>
<div class="b" style="left:1052px;top:205px;width:518px;height:42px;background:#fff;border:1px solid #dedede;border-radius:5px"></div>
<div class="b" style="left:323px;top:249px;width:37px;height:468px;background:#fff;border:1px solid #dedede;border-radius:5px"></div>
<div class="b" style="left:323px;top:720px;width:37px;height:206px;background:#fff;border:1px solid #dedede;border-radius:5px"></div>
<div class="b" style="left:518px;top:251px;width:1014px;height:764px;background:#fff"></div>
<div class="b" style="left:1532px;top:251px;width:6px;height:764px;background:#848484"></div>
<svg class="b" style="left:0px;top:0px;" width="1922" height="1042" viewBox="0 0 1922 1042"><rect x="330.6" y="213.5" width="20.8" height="26" rx="1" fill="#e5e8e8" stroke="#444" stroke-width="1.1"/><path d="M331.2 238.2h19.6" stroke="#fff" stroke-width="2.2"/><path d="M331.2 236.6h19.6" stroke="#888" stroke-width="0.9"/><path d="M336.8 230L344.2 222.4" stroke="#333" stroke-width="2.3"/><path d="M349.2 220.8A3.3 3.3 0 1 1 345.9 217.5" fill="none" stroke="#333" stroke-width="2"/><path d="M332.6 231.4A2.7 2.7 0 1 1 335.3 234.1" fill="none" stroke="#333" stroke-width="1.8"/><rect x="369.1" y="219.1" width="1.8" height="1.8" fill="#858494"/><rect x="369.1" y="223.1" width="1.8" height="1.8" fill="#858494"/><rect x="369.1" y="227.2" width="1.8" height="1.8" fill="#858494"/><rect x="369.1" y="231.2" width="1.8" height="1.8" fill="#858494"/><rect x="694.1" y="219.1" width="1.8" height="1.8" fill="#858494"/><rect x="694.1" y="223.1" width="1.8" height="1.8" fill="#858494"/><rect x="694.1" y="227.2" width="1.8" height="1.8" fill="#858494"/><rect x="694.1" y="231.2" width="1.8" height="1.8" fill="#858494"/><rect x="995.2" y="219.1" width="1.8" height="1.8" fill="#858494"/><rect x="995.2" y="223.1" width="1.8" height="1.8" fill="#858494"/><rect x="995.2" y="227.2" width="1.8" height="1.8" fill="#858494"/><rect x="995.2" y="231.2" width="1.8" height="1.8" fill="#858494"/><rect x="1059.1999999999998" y="219.1" width="1.8" height="1.8" fill="#858494"/><rect x="1059.1999999999998" y="223.1" width="1.8" height="1.8" fill="#858494"/><rect x="1059.1999999999998" y="227.2" width="1.8" height="1.8" fill="#858494"/><rect x="1059.1999999999998" y="231.2" width="1.8" height="1.8" fill="#858494"/><path d="M383.64 220.62A10.6 10.6 0 1 1 388.02 234.96" fill="none" stroke="#555" stroke-width="1.6"/><path d="M382.04 214.42L382.44 221.02L389.24 220.82" fill="none" stroke="#555" stroke-width="1.9"/><text x="390.4" y="229.6" font-size="8" text-anchor="end" fill="#555">+</text><text x="390.4" y="230.2" font-size="11" fill="#555">X</text><path d="M436.66 220.62A10.6 10.6 0 1 0 432.28 234.96" fill="none" stroke="#555" stroke-width="1.6"/><path d="M438.26 214.42L437.86 221.02L431.06 220.82" fill="none" stroke="#555" stroke-width="1.9"/><text x="424.7" y="229.6" font-size="8" text-anchor="end" fill="#555">-</text><text x="424.7" y="230.2" font-size="11" fill="#555">X</text><path d="M451.94 220.62A10.6 10.6 0 1 1 456.32 234.96" fill="none" stroke="#555" stroke-width="1.6"/><path d="M450.34 214.42L450.74 221.02L457.54 220.82" fill="none" stroke="#555" stroke-width="1.9"/><text x="458.7" y="229.6" font-size="8" text-anchor="end" fill="#555">+</text><text x="458.7" y="230.2" font-size="11" fill="#555">Y</text><path d="M504.66 220.62A10.6 10.6 0 1 0 500.28 234.96" fill="none" stroke="#555" stroke-width="1.6"/><path d="M506.26 214.42L505.86 221.02L499.06 220.82" fill="none" stroke="#555" stroke-width="1.9"/><text x="492.7" y="229.6" font-size="8" text-anchor="end" fill="#555">-</text><text x="492.7" y="230.2" font-size="11" fill="#555">Y</text><path d="M520.14 220.62A10.6 10.6 0 1 1 524.52 234.96" fill="none" stroke="#555" stroke-width="1.6"/><path d="M518.54 214.42L518.94 221.02L525.74 220.82" fill="none" stroke="#555" stroke-width="1.9"/><text x="526.9" y="229.6" font-size="8" text-anchor="end" fill="#555">+</text><text x="526.9" y="230.2" font-size="11" fill="#555">Z</text><path d="M572.86 220.62A10.6 10.6 0 1 0 568.48 234.96" fill="none" stroke="#555" stroke-width="1.6"/><path d="M574.46 214.42L574.06 221.02L567.26 220.82" fill="none" stroke="#555" stroke-width="1.9"/><text x="560.9" y="229.6" font-size="8" text-anchor="end" fill="#555">-</text><text x="560.9" y="230.2" font-size="11" fill="#555">Z</text><rect x="584" y="211" width="79" height="30" rx="3.5" fill="#fff" stroke="#b4b4b4"/><path d="M671 231.4h8l-4 4.8z" fill="#a6a6ae"/><path d="M972 231.4h8l-4 4.8z" fill="#a6a6ae"/><path d="M1035.8 231.4h8l-4 4.8z" fill="#a6a6ae"/><path d="M1555.3 231.4h8l-4 4.8z" fill="#a6a6ae"/><rect x="1008" y="225.6" width="18" height="12.4" fill="#555"/><path d="M1010.8 225.6V221a6.6 6.6 0 0 1 13.2 0v2" fill="none" stroke="#555" stroke-width="1.5"/><text x="1017" y="235.8" font-size="8.6" font-weight="bold" fill="#fff" text-anchor="middle" letter-spacing="-0.4">2D</text><path d="M1080.6 234.9L1080.6 216.8H1089.2L1089.2 234.9M1080.60 226.3H1089.20" fill="none" stroke="#333" stroke-width="1.6"/><path d="M1071.2 217.3h7M1076 215.3l2.4 2l-2.4 2M1071.2 225.9h7M1076 223.9l2.4 2l-2.4 2" stroke="#d63a2f" stroke-width="0.9" fill="none"/><path d="M1104.8 226.3V234.9M1114.2 226.3V234.9" stroke="#d9432f" stroke-width="1.6"/><path d="M1104.8 217V226.3H1114.2V217" fill="none" stroke="#2aa84a" stroke-width="1.6"/><path d="M1104 216.9H1115" stroke="#2d6fd0" stroke-width="1.7"/><path d="M1131.4 234.9L1134.0 217H1143.0L1140.4 234.9M1132.63 226.4H1141.63" fill="none" stroke="#333" stroke-width="1.6"/><path d="M1152.7 224.7L1156.9 228.7L1161.1000000000001 224.7" fill="none" stroke="#222" stroke-width="1.2"/><rect x="1204.5" y="211" width="169.5" height="30" rx="3.5" fill="#fff" stroke="#c9c9c9"/><rect x="1379" y="211" width="169.5" height="30" rx="3.5" fill="#fff" stroke="#c9c9c9"/><path d="M1353.8999999999999 224.3L1358.3 228.3L1362.7 224.3" fill="none" stroke="#aaa" stroke-width="1"/><path d="M1527.8999999999999 224.3L1532.3 228.3L1536.7 224.3" fill="none" stroke="#aaa" stroke-width="1"/><rect x="334.9" y="256.1" width="1.8" height="1.8" fill="#858494"/><rect x="339.0" y="256.1" width="1.8" height="1.8" fill="#858494"/><rect x="343.0" y="256.1" width="1.8" height="1.8" fill="#858494"/><rect x="347.1" y="256.1" width="1.8" height="1.8" fill="#858494"/><path d="M335.20000000000005 286.59999999999997V268.2H348.0V286.59999999999997M335.20000000000005 276.4H348.0" fill="none" stroke="#555" stroke-width="2.2"/><path d="M336.6 315.3V299.3H346.6V315.3M336.6 306.3H346.6" fill="none" stroke="#c9c9c9" stroke-width="2"/><rect x="332.20000000000005" y="297.3" width="18.8" height="15" fill="#fff" stroke="#2aa84a" stroke-width="1.1"/><rect x="337.20000000000005" y="300.90000000000003" width="8.8" height="7" fill="none" stroke="#555" stroke-width="2"/><path d="M336.6 344.3V328.3H346.6V344.3M336.6 335.3H346.6" fill="none" stroke="#c9c9c9" stroke-width="2"/><path d="M332.20000000000005 326.3H351.0L342.6 341.3H332.20000000000005Z" fill="#fff" stroke="#2aa84a" stroke-width="1.1"/><path d="M337.0 337.3V330.3H345.8V333.3" fill="none" stroke="#555" stroke-width="2"/><path d="M336.20000000000005 372.59999999999997V355.8H347.0V372.59999999999997M336.20000000000005 363.2H347.0" fill="none" stroke="#c9c9c9" stroke-width="2"/><path d="M336.20000000000005 372.59999999999997V365.2M347.0 365.2V355.8M336.20000000000005 363.59999999999997H347.0" stroke="#555" stroke-width="2" fill="none"/><path d="M332.0 373.59999999999997L351.20000000000005 354.59999999999997" stroke="#1e9a44" stroke-width="1.3"/><path d="M335.40000000000003 402.59999999999997V384.2H347.8V402.59999999999997M335.40000000000003 392.4H347.8" fill="none" stroke="#c6c6c6" stroke-width="2.1"/><rect x="332.20000000000005" y="414" width="18.8" height="15" fill="#fff" stroke="#d63a2f" stroke-width="1.1"/><path d="M336.6 432V416H346.6V432M336.6 423H346.6" fill="none" stroke="#bdbdbd" stroke-width="2"/><path d="M336.6 432V427.4M346.6 432V427.4M336.6 424H346.6" stroke="#555" stroke-width="2"/><path d="M332.20000000000005 442.7H351.0L342.6 457.7H332.20000000000005Z" fill="#fff" stroke="#d63a2f" stroke-width="1.1"/><path d="M336.6 460.7V444.7H346.6V460.7M336.6 451.7H346.6" fill="none" stroke="#bdbdbd" stroke-width="2"/><path d="M336.6 460.7V452.7H346.6V460.7" stroke="#555" stroke-width="2" fill="none"/><path d="M336.20000000000005 488.4V471.6H347.0V488.4M336.20000000000005 479H347.0" fill="none" stroke="#c6c6c6" stroke-width="2"/><path d="M336.20000000000005 476V471.6H347.0V476" stroke="#555" stroke-width="2" fill="none"/><path d="M332.0 489.4L351.20000000000005 470.4" stroke="#d2281e" stroke-width="1.3"/><path d="M333.20000000000005 499.79999999999995v19.2" stroke="#c6c6c6" stroke-width="2.2"/><path d="M350.0 499.79999999999995v19.2" stroke="#555" stroke-width="2.2"/><path d="M337.20000000000005 504.4h8M342.6 501.79999999999995l2.8 2.6l-2.8 2.6M346.0 514.8h-8M340.6 512.1999999999999l-2.8 2.6l2.8 2.6" stroke="#1467c8" stroke-width="1.2" fill="none"/><path d="M333.20000000000005 547.6V529.6" stroke="#c6c6c6" stroke-width="2"/><path d="M345.6 547.6V529.6" stroke="#c6c6c6" stroke-width="2"/><path d="M332.20000000000005 530.2H346.6M332.20000000000005 539.6H342.6" stroke="#555" stroke-width="2.2"/><path d="M352.12 542.27L352.12 544.13L350.57 544.17L350.15 545.18L351.22 546.31L349.91 547.62L348.78 546.55L347.77 546.97L347.73 548.52L345.87 548.52L345.83 546.97L344.82 546.55L343.69 547.62L342.38 546.31L343.45 545.18L343.03 544.17L341.48 544.13L341.48 542.27L343.03 542.23L343.45 541.22L342.38 540.09L343.69 538.78L344.82 539.85L345.83 539.43L345.87 537.88L347.73 537.88L347.77 539.43L348.78 539.85L349.91 538.78L351.22 540.09L350.15 541.22L350.57 542.23Z" fill="#1467c8" stroke="#fff" stroke-width="1.6" paint-order="stroke"/><circle cx="346.8" cy="543.2" r="2" fill="#fff"/><path d="M333.20000000000005 576.8V558.8" stroke="#c6c6c6" stroke-width="2"/><path d="M345.6 569.8V558.8" stroke="#c6c6c6" stroke-width="2"/><path d="M332.20000000000005 559.4H346.6M332.20000000000005 568.8H342.6" stroke="#555" stroke-width="2.2"/><path d="M342.0 568.4h7.6l2 2v7.2h-9.6z" fill="#1467c8"/><rect x="343.8" y="569.1999999999999" width="5" height="2.6" fill="#fff"/><rect x="343.40000000000003" y="573.4" width="6.8" height="3.4" fill="#a9cbf0"/><rect x="334.20000000000005" y="595.7" width="14.8" height="10.4" fill="#555"/><path d="M337.0 595.7V591.7a4.6 4.6 0 0 1 9.2 0v1.2" fill="none" stroke="#555" stroke-width="1.8"/><rect x="331.20000000000005" y="622.0" width="13.6" height="10" fill="#555"/><path d="M333.6 622.0V618.8a4.3 4.3 0 0 1 8.6 0V622.0" fill="none" stroke="#555" stroke-width="1.8"/><path d="M338.0 631.0q7 -7 14 0q-7 7 -14 0z" fill="#999" stroke="#f8f8f8" stroke-width="0.8"/><circle cx="345.0" cy="631.0" r="2.3" fill="#fff"/><circle cx="345.0" cy="631.0" r="1.1" fill="#999"/><path d="M331.20000000000005 653.8q10.4 -11 20.8 0q-10.4 11 -20.8 0z" fill="#555"/><circle cx="341.6" cy="653.8" r="4" fill="#fff"/><circle cx="341.6" cy="653.8" r="2.4" fill="#555"/><path d="M332.0 673.5h18.6l-7.4 8.4v8.4l-3.6 1.8v-10.2z" fill="#555"/><circle cx="346.6" cy="687.1" r="5.7" fill="#1467c8"/><path d="M346.6 684.1v5.6M344.20000000000005 687.5l2.4 2.4l2.4 -2.4" stroke="#fff" stroke-width="1.1" fill="none"/><path d="M345.2 703v8l4.2 -4z" fill="#a0a0a0"/><rect x="334.9" y="725.8000000000001" width="1.8" height="1.8" fill="#858494"/><rect x="339.0" y="725.8000000000001" width="1.8" height="1.8" fill="#858494"/><rect x="343.0" y="725.8000000000001" width="1.8" height="1.8" fill="#858494"/><rect x="347.1" y="725.8000000000001" width="1.8" height="1.8" fill="#858494"/><rect x="331.20000000000005" y="737.4" width="20.8" height="20" fill="#555"/><path d="M334.20000000000005 740.8h3.6M334.20000000000005 745.8h3.6M336.0 740.8v5" stroke="#fff" stroke-width="0.9"/><path d="M340.0 741.4h9.6M340.0 745.0h9.6M334.0 749.1999999999999h15.6M334.0 753.1999999999999h15.6" stroke="#fff" stroke-width="1.5"/><rect x="331.6" y="766" width="19.6" height="19.6" fill="#e3e7ea" stroke="#c9c9c9" stroke-width="0.8"/><path d="M331.6 772h19.6M331.6 778h19.6M338.6 766v19.6M345.6 772v13.6" stroke="#f6f6f6" stroke-width="1"/><path d="M334.0 773.4h2.6M335.3 773.4v4M334.0 777.6h2.6" stroke="#999" stroke-width="0.7"/><circle cx="346.8" cy="781.2" r="4.6" fill="#9dbcb0"/><circle cx="346.8" cy="781.2" r="2" fill="none" stroke="#dfe8e4" stroke-width="0.9"/><path d="M332.0 795.7h18.6l-7.4 8.4v8.4l-3.6 1.8v-10.2z" fill="#555"/><circle cx="346.6" cy="809.3000000000001" r="5.7" fill="#1467c8"/><path d="M343.6 807.9000000000001h6M343.6 810.7h6" stroke="#cfe0f5" stroke-width="1.6"/><path d="M349.20000000000005 828.6V825.4H333.20000000000005L341.0 834L333.20000000000005 842.6H349.20000000000005V839.4" fill="none" stroke="#4a4a4a" stroke-width="2.8" stroke-linejoin="miter"/><path d="M347.4200000000001 857.17V854.13H332.22L339.63000000000005 862.3L332.22 870.4699999999999H347.4200000000001V867.43" fill="none" stroke="#4a4a4a" stroke-width="2.8" stroke-linejoin="miter"/><rect x="345.0" y="866.9" width="7.6" height="6" fill="#fff" stroke="#1467c8" stroke-width="1.5"/><rect x="347.6" y="869.9" width="2.4" height="2.4" fill="#1467c8"/><path d="M331.6 889L347.6 885L352.0 895H331.6Z" fill="#dfe6d2" stroke="#cfd8cf" stroke-width="0.6"/><path d="M331.6 900C339.6 898 343.6 888 349.6 882M331.6 896C338.6 895 342.6 889 347.6 885M345.6 886v7M348.6 883v9M335.6 895v4" stroke="#e8847c" stroke-width="0.8" fill="none"/><path d="M345 911.7v8l4.2 -4z" fill="#a0a0a0"/><path d="M1696.8 258.4h8l-4 -4.8z" fill="#a6a6ae"/><path d="M1696.8 1005.2h8l-4 4.8z" fill="#a6a6ae"/><rect x="1698" y="272.4" width="6" height="705.6" rx="3" fill="#a3a3a9"/></svg>
<span class="t" style="left:592.7px;top:219.4px;font-size:14px;color:#222;transform:scaleX(0.9208);">11.25</span>
<span class="t" style="left:651.0px;top:219.6px;font-size:14px;color:#222;transform:scaleX(0.9750);">°</span>
<span class="t" style="left:708.3px;top:219.4px;font-size:14px;color:#333;transform:scaleX(0.9411);">ISO</span>
<span class="t" style="left:750.0px;top:219.4px;font-size:14px;color:#333;transform:scaleX(0.9261);">XY</span>
<span class="t" style="left:788.3px;top:219.4px;font-size:14px;color:#333;transform:scaleX(0.9726);">XZ</span>
<span class="t" style="left:826.7px;top:219.4px;font-size:14px;color:#333;transform:scaleX(0.9279);">YZ</span>
<span class="t" style="left:860.7px;top:219.4px;font-size:14px;color:#333;transform:scaleX(0.9681);">-XY</span>
<span class="t" style="left:899.0px;top:219.4px;font-size:14px;color:#333;transform:scaleX(1.0064);">-XZ</span>
<span class="t" style="left:937.7px;top:219.4px;font-size:14px;color:#333;transform:scaleX(0.9311);">-YZ</span>
<span class="t" style="left:1171.5px;top:219.2px;font-size:14px;color:#222;transform:scaleX(0.8897);">Type</span>
<span class="t" style="left:1212.7px;top:219.4px;font-size:14px;color:#a9a9a9;transform:scaleX(0.9127);">Basic Load Case</span>
<span class="t" style="left:1386.7px;top:219.4px;font-size:14px;color:#a9a9a9;transform:scaleX(0.9371);">BLC 1: Self Weight</span>
<div class="b" style="left:1714px;top:169px;width:1px;height:851px;background:#c8c8c8"></div>
<div class="b" style="left:1715px;top:201px;width:193px;height:819px;background:#fff"></div>
<div class="b" style="left:1908px;top:201px;width:13px;height:819px;background:#f3f3f3"></div>
<div class="b" style="left:1715px;top:169px;width:1206px;height:32px;background:#582c8f"></div>
<span class="t" style="left:1727.4px;top:177.9px;font-size:14px;color:#fff;transform:scaleX(0.8944);font-weight:bold;">Explorer</span>
<span class="t" style="left:1729.3px;top:208.1px;font-size:12px;color:#111;transform:scaleX(0.9806);">Distributed Loads</span>
<span class="t" style="left:1729.3px;top:234.1px;font-size:12px;color:#111;transform:scaleX(0.9780);">Member Area Loads</span>
<span class="t" style="left:1729.3px;top:260.1px;font-size:12px;color:#111;transform:scaleX(0.9367);">Surface Loads</span>
<span class="t" style="left:1729.3px;top:286.1px;font-size:12px;color:#111;transform:scaleX(0.9929);">Moving Loads</span>
<span class="t" style="left:1729.3px;top:312.1px;font-size:12px;color:#111;transform:scaleX(0.9743);">Time History Loads</span>
<span class="t" style="left:1729.3px;top:338.1px;font-size:12px;color:#111;transform:scaleX(1.0007);">Load Combinations</span>
<div class="b" style="left:1715px;top:370.6px;width:193px;height:1px;background:#c8c8c8"></div>
<span class="t" style="left:1729.3px;top:382.6px;font-size:14px;color:#111;transform:scaleX(0.8800);font-weight:bold;">Results</span>
<div class="b" style="left:1783px;top:379.6px;width:84px;height:18.9px;background:#ececec;border-radius:9.5px"></div>
<div class="b" style="left:1783px;top:379.6px;width:36px;height:18.9px;background:#7db0e8;border-radius:9.5px"></div>
<span class="t" style="left:1790.7px;top:382.6px;font-size:12px;color:#fff;transform:scaleX(0.9800);">Env</span>
<span class="t" style="left:1827.2px;top:382.6px;font-size:12px;color:#b0b0b0;transform:scaleX(0.9449);">Batch</span>
<svg class="b" style="left:1881px;top:382px;" width="14" height="14" viewBox="0 0 14 14"><path d="M2 9.4L7.2 4.2L12.4 9.4" fill="none" stroke="#222" stroke-width="1.2"/></svg>
<span class="t" style="left:1729.3px;top:414.0px;font-size:12px;color:#111;transform:scaleX(0.9648);">Node Reactions</span>
<span class="t" style="left:1729.3px;top:440.0px;font-size:12px;color:#111;transform:scaleX(0.9900);">Node Deflections</span>
<span class="t" style="left:1729.3px;top:466.0px;font-size:12px;color:#111;transform:scaleX(0.9878);">Story Drift</span>
<span class="t" style="left:1729.3px;top:492.0px;font-size:12px;color:#111;transform:scaleX(0.9699);">Member Forces</span>
<span class="t" style="left:1729.3px;top:518.0px;font-size:12px;color:#111;transform:scaleX(0.9400);">Member Stresses</span>
<span class="t" style="left:1729.3px;top:544.0px;font-size:12px;color:#111;transform:scaleX(0.9855);">Member Torsions</span>
<span class="t" style="left:1729.3px;top:570.0px;font-size:12px;color:#111;transform:scaleX(0.9978);">Member Deflections</span>
<span class="t" style="left:1729.3px;top:596.0px;font-size:12px;color:#111;transform:scaleX(0.9532);">Suggested Design</span>
<span class="t" style="left:1729.3px;top:622.0px;font-size:12px;color:#111;transform:scaleX(0.9644);">Code Check</span>
<span class="t" style="left:1729.3px;top:648.0px;font-size:12px;color:#111;transform:scaleX(0.9700);">Seismic Detailing</span>
<span class="t" style="left:1729.3px;top:674.0px;font-size:12px;color:#111;transform:scaleX(0.9871);">Concrete Reinforcing</span>
<span class="t" style="left:1729.3px;top:700.0px;font-size:12px;color:#111;transform:scaleX(0.8994);">Plate Stresses</span>
<span class="t" style="left:1729.3px;top:726.0px;font-size:12px;color:#111;transform:scaleX(0.9276);">Plate Forces</span>
<span class="t" style="left:1729.3px;top:752.0px;font-size:12px;color:#111;transform:scaleX(0.9451);">Plate Corner Forces</span>
<span class="t" style="left:1729.3px;top:778.0px;font-size:12px;color:#111;transform:scaleX(0.9073);">Solid Stresses</span>
<span class="t" style="left:1729.3px;top:804.0px;font-size:12px;color:#111;transform:scaleX(0.9725);">Solid Principals</span>
<span class="t" style="left:1729.3px;top:830.0px;font-size:12px;color:#111;transform:scaleX(0.9510);">Solid Corner Forces</span>
<span class="t" style="left:1729.3px;top:856.0px;font-size:12px;color:#111;transform:scaleX(0.9577);">Wall Panel Design</span>
<span class="t" style="left:1729.3px;top:882.0px;font-size:12px;color:#111;transform:scaleX(0.9459);">Wall Panel Forces</span>
<span class="t" style="left:1729.3px;top:908.0px;font-size:12px;color:#111;transform:scaleX(0.9821);">Material TakeOff</span>
<span class="t" style="left:1729.3px;top:934.0px;font-size:12px;color:#111;transform:scaleX(0.9462);">Frequencies</span>
<span class="t" style="left:1729.3px;top:960.0px;font-size:12px;color:#111;transform:scaleX(0.9518);">Mode Shapes</span>
<span class="t" style="left:1729.3px;top:986.0px;font-size:12px;color:#111;transform:scaleX(0.9752);">Connection Results</span>
<svg class="b" style="left:1908px;top:201px;" width="13" height="819" viewBox="0 0 13 819"><path d="M2.8 9.6h8l-4 -4.8z" fill="#a6a6ae"/><path d="M2.8 808.6h8l-4 4.8z" fill="#a6a6ae"/><rect x="3.9" y="315" width="6" height="489.5" rx="3" fill="#a3a3a9"/></svg>
<svg class="b" style="left:0;top:0" width="1922" height="1042" viewBox="0 0 1922 1042"><g stroke-linecap="butt" fill="none"><polygon points="1212.0,601.8 1286.0,644.6 1283.0,646.8 1209.0,604.0" fill="#f3b4b4"/><polygon points="1283.0,646.8 1286.0,644.6 1286.0,706.8 1283.0,709.0" fill="#e6a0a0"/><polygon points="1209.0,604.0 1283.0,646.8 1283.0,709.0 1209.0,664.5" fill="#f8a3a3"/><polygon points="1254.0,660.0 1265.5,666.5 1265.5,702.0 1254.0,702.0" fill="#fff" stroke="#e9a6a6" stroke-width="0.8"/><polygon points="1254.0,660.0 1256.4,661.4 1256.4,702.0 1254.0,702.0" fill="#e3a0a0"/><path d="M1202.0 662.9l-5.6 6.4h11.2zM1194.0 669.3h16" fill="none" stroke="#e0861a" stroke-width="1.25"/><path d="M1195.6 669.3l-1.6 3.6M1198.2 669.3l-1.6 3.6M1200.8 669.3l-1.6 3.6M1203.4 669.3l-1.6 3.6M1206.0 669.3l-1.6 3.6M1208.6 669.3l-1.6 3.6" stroke="#e0861a" stroke-width="1.1"/><circle cx="1202.0" cy="662.3" r="1.9" fill="#0c7c12"/><path d="M1294.0 715.3L1202.0 768.3" stroke="#e0861a" stroke-width="1.1" /><path d="M1018.0 768.3L1110.0 821.3" stroke="#e0861a" stroke-width="1.1" /><path d="M1018.0 768.9l-5.6 6.4h11.2zM1010.0 775.3h16" fill="none" stroke="#e0861a" stroke-width="1.25"/><path d="M1011.6 775.3l-1.6 3.6M1014.2 775.3l-1.6 3.6M1016.8 775.3l-1.6 3.6M1019.4 775.3l-1.6 3.6M1022.0 775.3l-1.6 3.6M1024.6 775.3l-1.6 3.6" stroke="#e0861a" stroke-width="1.1"/><circle cx="1018.0" cy="768.3" r="1.9" fill="#0c7c12"/><path d="M1018.0 485.3L1018.0 556.3" stroke="#000" stroke-width="1.0" /><path d="M1013.1 491.3L1018.4 493.5L1022.9 491.3V547.9L1018.4 550.3L1013.1 547.9Z" fill="#9aa5da" stroke="#1d1f30" stroke-width="0.9"/><path d="M1018.4 493.7L1022.5 491.9V547.7L1018.4 549.8Z" fill="#4c5276"/><path d="M1110.0 538.3L1110.0 609.3" stroke="#000" stroke-width="1.0" /><path d="M1105.1 544.3L1110.4 546.5L1114.9 544.3V600.9L1110.4 603.3L1105.1 600.9Z" fill="#9aa5da" stroke="#1d1f30" stroke-width="0.9"/><path d="M1110.4 546.7L1114.5 544.9V600.7L1110.4 602.8Z" fill="#4c5276"/><path d="M926.0 538.3L926.0 609.3" stroke="#000" stroke-width="1.0" /><path d="M921.1 544.3L926.4 546.5L930.9 544.3V600.9L926.4 603.3L921.1 600.9Z" fill="#9aa5da" stroke="#1d1f30" stroke-width="0.9"/><path d="M926.4 546.7L930.5 544.9V600.7L926.4 602.8Z" fill="#4c5276"/><path d="M1018.0 591.3L1018.0 662.3" stroke="#000" stroke-width="1.0" /><path d="M1013.1 597.3L1018.4 599.5L1022.9 597.3V653.9L1018.4 656.3L1013.1 653.9Z" fill="#9aa5da" stroke="#1d1f30" stroke-width="0.9"/><path d="M1018.4 599.7L1022.5 597.9V653.7L1018.4 655.8Z" fill="#4c5276"/><path d="M1202.0 591.3L1202.0 662.3" stroke="#000" stroke-width="1.0" /><path d="M1197.1 597.3L1202.4 599.5L1206.9 597.3V653.9L1202.4 656.3L1197.1 653.9Z" fill="#9aa5da" stroke="#1d1f30" stroke-width="0.9"/><path d="M1202.4 599.7L1206.5 597.9V653.7L1202.4 655.8Z" fill="#4c5276"/><path d="M1110.0 644.3L1110.0 715.3" stroke="#000" stroke-width="1.0" /><path d="M1105.1 650.3L1110.4 652.5L1114.9 650.3V706.9L1110.4 709.3L1105.1 706.9Z" fill="#9aa5da" stroke="#1d1f30" stroke-width="0.9"/><path d="M1110.4 652.7L1114.5 650.9V706.7L1110.4 708.8Z" fill="#4c5276"/><path d="M834.0 591.3L834.0 662.3" stroke="#000" stroke-width="1.0" /><path d="M829.1 597.3L834.4 599.5L838.9 597.3V653.9L834.4 656.3L829.1 653.9Z" fill="#9aa5da" stroke="#1d1f30" stroke-width="0.9"/><path d="M834.4 599.7L838.5 597.9V653.7L834.4 655.8Z" fill="#4c5276"/><path d="M926.0 644.3L926.0 715.3" stroke="#000" stroke-width="1.0" /><path d="M921.1 650.3L926.4 652.5L930.9 650.3V706.9L926.4 709.3L921.1 706.9Z" fill="#9aa5da" stroke="#1d1f30" stroke-width="0.9"/><path d="M926.4 652.7L930.5 650.9V706.7L926.4 708.8Z" fill="#4c5276"/><path d="M1110.0 715.9l-5.6 6.4h11.2zM1102.0 722.3h16" fill="none" stroke="#1e9a1e" stroke-width="1.25"/><path d="M1103.6 722.3l-1.6 3.6M1106.2 722.3l-1.6 3.6M1108.8 722.3l-1.6 3.6M1111.4 722.3l-1.6 3.6M1114.0 722.3l-1.6 3.6M1116.6 722.3l-1.6 3.6" stroke="#1e9a1e" stroke-width="1.1"/><circle cx="1110.0" cy="715.3" r="1.9" fill="#0c7c12"/><path d="M834.0 662.9l-5.6 6.4h11.2zM826.0 669.3h16" fill="none" stroke="#1e9a1e" stroke-width="1.25"/><path d="M827.6 669.3l-1.6 3.6M830.2 669.3l-1.6 3.6M832.8 669.3l-1.6 3.6M835.4 669.3l-1.6 3.6M838.0 669.3l-1.6 3.6M840.6 669.3l-1.6 3.6" stroke="#1e9a1e" stroke-width="1.1"/><circle cx="834.0" cy="662.3" r="1.9" fill="#0c7c12"/><path d="M926.0 715.9l-5.6 6.4h11.2zM918.0 722.3h16" fill="none" stroke="#1e9a1e" stroke-width="1.25"/><path d="M919.6 722.3l-1.6 3.6M922.2 722.3l-1.6 3.6M924.8 722.3l-1.6 3.6M927.4 722.3l-1.6 3.6M930.0 722.3l-1.6 3.6M932.6 722.3l-1.6 3.6" stroke="#1e9a1e" stroke-width="1.1"/><circle cx="926.0" cy="715.3" r="1.9" fill="#0c7c12"/><path d="M1171.3 609.0L1263.3 662.0" stroke="#000" stroke-width="1.0" /><path d="M1178.3 613.0L1256.4 658.0" stroke="#1c1c1c" stroke-width="9.1"/><path d="M1178.3 613.0L1256.4 658.0" stroke="#6c73ab" stroke-width="7.2"/><path d="M1179.2 611.3L1257.3 656.4" stroke="#a4abe0" stroke-width="3.02"/><path d="M1177.3 614.7L1255.4 659.7" stroke="#4a4f82" stroke-width="2.16"/><circle cx="1263.3" cy="662.0" r="1.7" fill="#0c7c12"/><path d="M1140.7 626.6L1232.7 679.6" stroke="#000" stroke-width="1.0" /><path d="M1147.6 630.6L1225.7 675.6" stroke="#1c1c1c" stroke-width="9.1"/><path d="M1147.6 630.6L1225.7 675.6" stroke="#6c73ab" stroke-width="7.2"/><path d="M1148.5 629.0L1226.7 674.0" stroke="#a4abe0" stroke-width="3.02"/><path d="M1146.6 632.3L1224.8 677.3" stroke="#4a4f82" stroke-width="2.16"/><circle cx="1232.7" cy="679.6" r="1.7" fill="#0c7c12"/><path d="M1110.0 644.3L1202.0 697.3" stroke="#000" stroke-width="1.0" /><path d="M1116.9 648.3L1195.1 693.3" stroke="#1c1c1c" stroke-width="9.1"/><path d="M1116.9 648.3L1195.1 693.3" stroke="#6c73ab" stroke-width="7.2"/><path d="M1117.9 646.7L1196.0 691.7" stroke="#a4abe0" stroke-width="3.02"/><path d="M1116.0 650.0L1194.1 695.0" stroke="#4a4f82" stroke-width="2.16"/><circle cx="1202.0" cy="697.3" r="1.7" fill="#0c7c12"/><path d="M1079.3 662.0L1171.3 715.0" stroke="#000" stroke-width="1.0" /><path d="M1086.3 666.0L1164.4 711.0" stroke="#1c1c1c" stroke-width="9.1"/><path d="M1086.3 666.0L1164.4 711.0" stroke="#6c73ab" stroke-width="7.2"/><path d="M1087.2 664.3L1165.3 709.4" stroke="#a4abe0" stroke-width="3.02"/><path d="M1085.3 667.7L1163.4 712.7" stroke="#4a4f82" stroke-width="2.16"/><circle cx="1171.3" cy="715.0" r="1.7" fill="#0c7c12"/><path d="M1048.7 679.6L1140.7 732.6" stroke="#000" stroke-width="1.0" /><path d="M1055.6 683.6L1133.7 728.6" stroke="#1c1c1c" stroke-width="9.1"/><path d="M1055.6 683.6L1133.7 728.6" stroke="#6c73ab" stroke-width="7.2"/><path d="M1056.5 682.0L1134.7 727.0" stroke="#a4abe0" stroke-width="3.02"/><path d="M1054.6 685.3L1132.8 730.3" stroke="#4a4f82" stroke-width="2.16"/><circle cx="1140.7" cy="732.6" r="1.7" fill="#0c7c12"/><path d="M1110.0 750.3L1202.0 697.3" stroke="#000" stroke-width="1.0" /><path d="M1117.8 745.8L1194.2 701.8" stroke="#1c1c1c" stroke-width="9.1"/><path d="M1117.8 745.8L1194.2 701.8" stroke="#6c73ab" stroke-width="7.2"/><path d="M1116.9 744.2L1193.3 700.2" stroke="#a4abe0" stroke-width="3.02"/><path d="M1118.8 747.5L1195.2 703.5" stroke="#4a4f82" stroke-width="2.16"/><circle cx="1110.0" cy="750.3" r="1.7" fill="#0c7c12"/><defs><pattern id="pl" width="1" height="1" patternUnits="userSpaceOnUse" patternTransform="matrix(10.2222 5.8889 -10.2222 5.8889 1018 485.29999999999995)"><rect width="1" height="1" fill="#4d76a8"/><rect x="0.1" y="0.1" width="0.8" height="0.8" fill="#3d5a7d" stroke="#d5dfeb" stroke-width="0.075"/><circle cx="0" cy="0" r="0.085" fill="#1f8a2a"/><circle cx="1" cy="0" r="0.085" fill="#1f8a2a"/><circle cx="0" cy="1" r="0.085" fill="#1f8a2a"/><circle cx="1" cy="1" r="0.085" fill="#1f8a2a"/></pattern></defs><polygon points="830.0,591.3 1018.0,699.6 1018.0,703.4 830.0,595.1" fill="#a3abe2" stroke="#15151f" stroke-width="0.8"/><polygon points="1018.0,699.6 1206.0,591.3 1206.0,595.1 1018.0,703.4" fill="#7f88c2" stroke="#15151f" stroke-width="0.8"/><polygon points="1018.0,483.0 1206.0,591.3 1018.0,699.6 830.0,591.3" fill="#45638a"/><polygon points="1018.0,485.3 1202.0,591.3 1018.0,697.3 834.0,591.3" fill="url(#pl)"/><polygon points="1007.0,587.1 1016.2,592.4 1007.9,597.1 998.7,591.8" fill="#fff"/><polygon points="1030.9,589.2 1040.1,594.5 1031.8,599.2 1022.6,593.9" fill="#fff"/><path d="M1018.0 415.3L1018.0 485.3" stroke="#000" stroke-width="1.0" /><rect x="1014.1" y="422.3" width="7.8" height="55.0" fill="#6a6a6a" stroke="#0c0c0c" stroke-width="1"/><rect x="1016.7" y="422.7" width="3" height="54.2" fill="#dcdcdc"/><rect x="1020.3" y="422.7" width="1.1" height="54.2" fill="#9a9a9a"/><path d="M1018.0 415.3L1110.0 468.3" stroke="#000" stroke-width="1.0" /><path d="M1024.9 419.3L1103.1 464.3" stroke="#0c0c0c" stroke-width="6.4"/><path d="M1024.9 419.3L1103.1 464.3" stroke="#595959" stroke-width="4.5"/><path d="M1025.4 418.4L1103.6 463.4" stroke="#868686" stroke-width="0.99"/><path d="M926.0 468.3L1018.0 415.3" stroke="#000" stroke-width="1.0" /><path d="M932.9 464.3L1011.1 419.3" stroke="#0c0c0c" stroke-width="6.4"/><path d="M932.9 464.3L1011.1 419.3" stroke="#595959" stroke-width="4.5"/><path d="M932.4 463.4L1010.6 418.4" stroke="#868686" stroke-width="0.99"/><path d="M1110.0 468.3L1110.0 538.3" stroke="#000" stroke-width="1.0" /><rect x="1106.1" y="475.3" width="7.8" height="55.0" fill="#6a6a6a" stroke="#0c0c0c" stroke-width="1"/><rect x="1108.7" y="475.7" width="3" height="54.2" fill="#dcdcdc"/><rect x="1112.3" y="475.7" width="1.1" height="54.2" fill="#9a9a9a"/><path d="M926.0 468.3L926.0 538.3" stroke="#000" stroke-width="1.0" /><rect x="922.1" y="475.3" width="7.8" height="55.0" fill="#6a6a6a" stroke="#0c0c0c" stroke-width="1"/><rect x="924.7" y="475.7" width="3" height="54.2" fill="#dcdcdc"/><rect x="928.3" y="475.7" width="1.1" height="54.2" fill="#9a9a9a"/><path d="M1110.0 468.3L1140.7 486.0" stroke="#000" stroke-width="1.0" /><path d="M1113.9 470.5L1136.8 483.7" stroke="#0c0c0c" stroke-width="6.9"/><path d="M1113.9 470.5L1136.8 483.7" stroke="#b5b5b5" stroke-width="5.0"/><path d="M1114.4 469.6L1137.3 482.8" stroke="#ececec" stroke-width="1.70"/><path d="M1113.3 471.5L1136.2 484.7" stroke="#454545" stroke-width="1.80"/><path d="M834.0 521.3L926.0 468.3" stroke="#000" stroke-width="1.0" /><path d="M840.9 517.3L919.1 472.3" stroke="#0c0c0c" stroke-width="6.4"/><path d="M840.9 517.3L919.1 472.3" stroke="#595959" stroke-width="4.5"/><path d="M840.4 516.4L918.6 471.4" stroke="#868686" stroke-width="0.99"/><path d="M1018.0 521.3L1110.0 468.3" stroke="#000" stroke-width="1.0" /><path d="M1024.9 517.3L1103.1 472.3" stroke="#0c0c0c" stroke-width="6.4"/><path d="M1024.9 517.3L1103.1 472.3" stroke="#595959" stroke-width="4.5"/><path d="M1024.4 516.4L1102.6 471.4" stroke="#868686" stroke-width="0.99"/><path d="M1140.7 486.0L1171.3 503.6" stroke="#000" stroke-width="1.0" /><path d="M1144.6 488.2L1167.4 501.4" stroke="#0c0c0c" stroke-width="6.9"/><path d="M1144.6 488.2L1167.4 501.4" stroke="#b5b5b5" stroke-width="5.0"/><path d="M1145.1 487.3L1168.0 500.4" stroke="#ececec" stroke-width="1.70"/><path d="M1144.0 489.2L1166.9 502.4" stroke="#454545" stroke-width="1.80"/><path d="M926.0 468.3L1018.0 521.3" stroke="#000" stroke-width="1.0" /><path d="M932.9 472.3L1011.1 517.3" stroke="#0c0c0c" stroke-width="6.9"/><path d="M932.9 472.3L1011.1 517.3" stroke="#b5b5b5" stroke-width="5.0"/><path d="M933.5 471.3L1011.6 516.4" stroke="#ececec" stroke-width="1.70"/><path d="M932.4 473.3L1010.5 518.3" stroke="#454545" stroke-width="1.80"/><path d="M1202.0 521.3L1202.0 591.3" stroke="#000" stroke-width="1.0" /><rect x="1198.1" y="528.3" width="7.8" height="55.0" fill="#6a6a6a" stroke="#0c0c0c" stroke-width="1"/><rect x="1200.7" y="528.7" width="3" height="54.2" fill="#dcdcdc"/><rect x="1204.3" y="528.7" width="1.1" height="54.2" fill="#9a9a9a"/><path d="M1018.0 521.3L1018.0 591.3" stroke="#000" stroke-width="1.0" /><rect x="1014.1" y="528.3" width="7.8" height="55.0" fill="#6a6a6a" stroke="#0c0c0c" stroke-width="1"/><rect x="1016.7" y="528.7" width="3" height="54.2" fill="#dcdcdc"/><rect x="1020.3" y="528.7" width="1.1" height="54.2" fill="#9a9a9a"/><path d="M834.0 521.3L834.0 591.3" stroke="#000" stroke-width="1.0" /><rect x="830.1" y="528.3" width="7.8" height="55.0" fill="#6a6a6a" stroke="#0c0c0c" stroke-width="1"/><rect x="832.7" y="528.7" width="3" height="54.2" fill="#dcdcdc"/><rect x="836.3" y="528.7" width="1.1" height="54.2" fill="#9a9a9a"/><path d="M864.7 539.0L956.7 486.0" stroke="#000" stroke-width="1.0" /><path d="M871.6 535.0L949.7 490.0" stroke="#0c0c0c" stroke-width="6.4"/><path d="M871.6 535.0L949.7 490.0" stroke="#595959" stroke-width="4.5"/><path d="M871.1 534.1L949.2 489.1" stroke="#868686" stroke-width="0.99"/><path d="M1048.7 539.0L1140.7 486.0" stroke="#000" stroke-width="1.0" /><path d="M1055.6 535.0L1133.7 490.0" stroke="#0c0c0c" stroke-width="6.4"/><path d="M1055.6 535.0L1133.7 490.0" stroke="#595959" stroke-width="4.5"/><path d="M1055.1 534.1L1133.2 489.1" stroke="#868686" stroke-width="0.99"/><path d="M1171.3 503.6L1202.0 521.3" stroke="#000" stroke-width="1.0" /><path d="M1175.2 505.9L1198.1 519.1" stroke="#0c0c0c" stroke-width="6.9"/><path d="M1175.2 505.9L1198.1 519.1" stroke="#b5b5b5" stroke-width="5.0"/><path d="M1175.8 504.9L1198.6 518.1" stroke="#ececec" stroke-width="1.70"/><path d="M1174.7 506.9L1197.5 520.1" stroke="#454545" stroke-width="1.80"/><path d="M895.3 556.6L987.3 503.6" stroke="#000" stroke-width="1.0" /><path d="M902.3 552.6L980.4 507.6" stroke="#0c0c0c" stroke-width="6.4"/><path d="M902.3 552.6L980.4 507.6" stroke="#595959" stroke-width="4.5"/><path d="M901.8 551.8L979.9 506.8" stroke="#868686" stroke-width="0.99"/><path d="M1079.3 556.6L1171.3 503.6" stroke="#000" stroke-width="1.0" /><path d="M1086.3 552.6L1164.4 507.6" stroke="#0c0c0c" stroke-width="6.4"/><path d="M1086.3 552.6L1164.4 507.6" stroke="#595959" stroke-width="4.5"/><path d="M1085.8 551.8L1163.9 506.8" stroke="#868686" stroke-width="0.99"/><path d="M1202.0 521.3L1232.7 539.0" stroke="#000" stroke-width="1.0" /><path d="M1205.9 523.5L1228.8 536.7" stroke="#0c0c0c" stroke-width="6.9"/><path d="M1205.9 523.5L1228.8 536.7" stroke="#b5b5b5" stroke-width="5.0"/><path d="M1206.4 522.6L1229.3 535.8" stroke="#ececec" stroke-width="1.70"/><path d="M1205.3 524.5L1228.2 537.7" stroke="#454545" stroke-width="1.80"/><path d="M926.0 574.3L1018.0 521.3" stroke="#000" stroke-width="1.0" /><path d="M932.9 570.3L1011.1 525.3" stroke="#0c0c0c" stroke-width="6.4"/><path d="M932.9 570.3L1011.1 525.3" stroke="#595959" stroke-width="4.5"/><path d="M932.4 569.4L1010.6 524.4" stroke="#868686" stroke-width="0.99"/><path d="M1110.0 574.3L1202.0 521.3" stroke="#000" stroke-width="1.0" /><path d="M1116.9 570.3L1195.1 525.3" stroke="#0c0c0c" stroke-width="6.4"/><path d="M1116.9 570.3L1195.1 525.3" stroke="#595959" stroke-width="4.5"/><path d="M1116.4 569.4L1194.6 524.4" stroke="#868686" stroke-width="0.99"/><path d="M1232.7 539.0L1263.3 556.6" stroke="#000" stroke-width="1.0" /><path d="M1236.6 541.2L1259.4 554.4" stroke="#0c0c0c" stroke-width="6.9"/><path d="M1236.6 541.2L1259.4 554.4" stroke="#b5b5b5" stroke-width="5.0"/><path d="M1237.1 540.3L1260.0 553.4" stroke="#ececec" stroke-width="1.70"/><path d="M1236.0 542.2L1258.9 555.4" stroke="#454545" stroke-width="1.80"/><path d="M1018.0 521.3L1110.0 574.3" stroke="#000" stroke-width="1.0" /><path d="M1024.9 525.3L1103.1 570.3" stroke="#0c0c0c" stroke-width="6.9"/><path d="M1024.9 525.3L1103.1 570.3" stroke="#b5b5b5" stroke-width="5.0"/><path d="M1025.5 524.3L1103.6 569.4" stroke="#ececec" stroke-width="1.70"/><path d="M1024.4 526.3L1102.5 571.3" stroke="#454545" stroke-width="1.80"/><path d="M834.0 521.3L926.0 574.3" stroke="#000" stroke-width="1.0" /><path d="M840.9 525.3L919.1 570.3" stroke="#0c0c0c" stroke-width="6.9"/><path d="M840.9 525.3L919.1 570.3" stroke="#b5b5b5" stroke-width="5.0"/><path d="M841.5 524.3L919.6 569.4" stroke="#ececec" stroke-width="1.70"/><path d="M840.4 526.3L918.5 571.3" stroke="#454545" stroke-width="1.80"/><path d="M1294.0 574.3L1294.0 644.3" stroke="#000" stroke-width="1.0" /><rect x="1290.1" y="581.3" width="7.8" height="55.0" fill="#6a6a6a" stroke="#0c0c0c" stroke-width="1"/><rect x="1292.7" y="581.7" width="3" height="54.2" fill="#dcdcdc"/><rect x="1296.3" y="581.7" width="1.1" height="54.2" fill="#9a9a9a"/><path d="M1110.0 574.3L1110.0 644.3" stroke="#000" stroke-width="1.0" /><rect x="1106.1" y="581.3" width="7.8" height="55.0" fill="#6a6a6a" stroke="#0c0c0c" stroke-width="1"/><rect x="1108.7" y="581.7" width="3" height="54.2" fill="#dcdcdc"/><rect x="1112.3" y="581.7" width="1.1" height="54.2" fill="#9a9a9a"/><path d="M926.0 574.3L926.0 644.3" stroke="#000" stroke-width="1.0" /><rect x="922.1" y="581.3" width="7.8" height="55.0" fill="#6a6a6a" stroke="#0c0c0c" stroke-width="1"/><rect x="924.7" y="581.7" width="3" height="54.2" fill="#dcdcdc"/><rect x="928.3" y="581.7" width="1.1" height="54.2" fill="#9a9a9a"/><path d="M956.7 592.0L1048.7 539.0" stroke="#000" stroke-width="1.0" /><path d="M963.6 588.0L1041.7 543.0" stroke="#0c0c0c" stroke-width="6.4"/><path d="M963.6 588.0L1041.7 543.0" stroke="#595959" stroke-width="4.5"/><path d="M963.1 587.1L1041.2 542.1" stroke="#868686" stroke-width="0.99"/><path d="M1140.7 592.0L1232.7 539.0" stroke="#000" stroke-width="1.0" /><path d="M1147.6 588.0L1225.7 543.0" stroke="#0c0c0c" stroke-width="6.4"/><path d="M1147.6 588.0L1225.7 543.0" stroke="#595959" stroke-width="4.5"/><path d="M1147.1 587.1L1225.2 542.1" stroke="#868686" stroke-width="0.99"/><path d="M1263.3 556.6L1294.0 574.3" stroke="#000" stroke-width="1.0" /><path d="M1267.2 558.9L1290.1 572.1" stroke="#0c0c0c" stroke-width="6.9"/><path d="M1267.2 558.9L1290.1 572.1" stroke="#b5b5b5" stroke-width="5.0"/><path d="M1267.8 557.9L1290.6 571.1" stroke="#ececec" stroke-width="1.70"/><path d="M1266.7 559.9L1289.5 573.1" stroke="#454545" stroke-width="1.80"/><path d="M1171.3 609.6L1263.3 556.6" stroke="#000" stroke-width="1.0" /><path d="M1178.3 605.6L1256.4 560.6" stroke="#0c0c0c" stroke-width="6.4"/><path d="M1178.3 605.6L1256.4 560.6" stroke="#595959" stroke-width="4.5"/><path d="M1177.8 604.8L1255.9 559.8" stroke="#868686" stroke-width="0.99"/><path d="M987.3 609.6L1079.3 556.6" stroke="#000" stroke-width="1.0" /><path d="M994.3 605.6L1072.4 560.6" stroke="#0c0c0c" stroke-width="6.4"/><path d="M994.3 605.6L1072.4 560.6" stroke="#595959" stroke-width="4.5"/><path d="M993.8 604.8L1071.9 559.8" stroke="#868686" stroke-width="0.99"/><path d="M1018.0 627.3L1110.0 574.3" stroke="#000" stroke-width="1.0" /><path d="M1024.9 623.3L1103.1 578.3" stroke="#0c0c0c" stroke-width="6.4"/><path d="M1024.9 623.3L1103.1 578.3" stroke="#595959" stroke-width="4.5"/><path d="M1024.4 622.4L1102.6 577.4" stroke="#868686" stroke-width="0.99"/><path d="M1202.0 627.3L1294.0 574.3" stroke="#000" stroke-width="1.0" /><path d="M1208.9 623.3L1287.1 578.3" stroke="#0c0c0c" stroke-width="6.4"/><path d="M1208.9 623.3L1287.1 578.3" stroke="#595959" stroke-width="4.5"/><path d="M1208.4 622.4L1286.6 577.4" stroke="#868686" stroke-width="0.99"/><path d="M1018.0 627.3L1110.0 644.3" stroke="#000" stroke-width="1.0" /><path d="M1026.9 628.9L1101.1 642.7" stroke="#1c1c1c" stroke-width="7.300000000000001"/><path d="M1026.9 628.9L1101.1 642.7" stroke="#555" stroke-width="5.4"/><path d="M1027.1 627.8L1101.4 641.5" stroke="#7e7e7e" stroke-width="1.51"/><path d="M1202.0 627.3L1294.0 644.3" stroke="#000" stroke-width="1.0" /><path d="M1210.9 628.9L1285.1 642.7" stroke="#1c1c1c" stroke-width="7.300000000000001"/><path d="M1210.9 628.9L1285.1 642.7" stroke="#555" stroke-width="5.4"/><path d="M1211.1 627.8L1285.4 641.5" stroke="#7e7e7e" stroke-width="1.51"/><path d="M1110.0 574.3L1202.0 627.3" stroke="#000" stroke-width="1.0" /><path d="M1116.9 578.3L1195.1 623.3" stroke="#0c0c0c" stroke-width="6.9"/><path d="M1116.9 578.3L1195.1 623.3" stroke="#b5b5b5" stroke-width="5.0"/><path d="M1117.5 577.3L1195.6 622.4" stroke="#ececec" stroke-width="1.70"/><path d="M1116.4 579.3L1194.5 624.3" stroke="#454545" stroke-width="1.80"/><path d="M926.0 574.3L1018.0 627.3" stroke="#000" stroke-width="1.0" /><path d="M932.9 578.3L1011.1 623.3" stroke="#0c0c0c" stroke-width="6.9"/><path d="M932.9 578.3L1011.1 623.3" stroke="#b5b5b5" stroke-width="5.0"/><path d="M933.5 577.3L1011.6 622.4" stroke="#ececec" stroke-width="1.70"/><path d="M932.4 579.3L1010.5 624.3" stroke="#454545" stroke-width="1.80"/><path d="M1018.0 697.3L1110.0 574.3" stroke="#000" stroke-width="1.0" /><path d="M1023.4 690.1L1104.6 581.5" stroke="#1c1c1c" stroke-width="7.300000000000001"/><path d="M1023.4 690.1L1104.6 581.5" stroke="#555" stroke-width="5.4"/><path d="M1022.4 689.4L1103.7 580.8" stroke="#7e7e7e" stroke-width="1.51"/><path d="M1202.0 697.3L1294.0 574.3" stroke="#000" stroke-width="1.0" /><path d="M1207.4 690.1L1288.6 581.5" stroke="#1c1c1c" stroke-width="7.300000000000001"/><path d="M1207.4 690.1L1288.6 581.5" stroke="#555" stroke-width="5.4"/><path d="M1206.4 689.4L1287.7 580.8" stroke="#7e7e7e" stroke-width="1.51"/><path d="M1202.0 627.3L1202.0 697.3" stroke="#000" stroke-width="1.0" /><rect x="1198.1" y="634.3" width="7.8" height="55.0" fill="#6a6a6a" stroke="#0c0c0c" stroke-width="1"/><rect x="1200.7" y="634.7" width="3" height="54.2" fill="#dcdcdc"/><rect x="1204.3" y="634.7" width="1.1" height="54.2" fill="#9a9a9a"/><path d="M1018.0 627.3L1018.0 697.3" stroke="#000" stroke-width="1.0" /><rect x="1014.1" y="634.3" width="7.8" height="55.0" fill="#6a6a6a" stroke="#0c0c0c" stroke-width="1"/><rect x="1016.7" y="634.7" width="3" height="54.2" fill="#dcdcdc"/><rect x="1020.3" y="634.7" width="1.1" height="54.2" fill="#9a9a9a"/><circle cx="1018.0" cy="415.3" r="1.7" fill="#0c7c12"/><circle cx="1018.0" cy="485.3" r="1.7" fill="#0c7c12"/><circle cx="1110.0" cy="468.3" r="1.7" fill="#0c7c12"/><circle cx="1110.0" cy="538.3" r="1.7" fill="#0c7c12"/><circle cx="1202.0" cy="521.3" r="1.7" fill="#0c7c12"/><circle cx="1202.0" cy="591.3" r="1.7" fill="#0c7c12"/><circle cx="1294.0" cy="574.3" r="1.7" fill="#0c7c12"/><circle cx="1294.0" cy="644.3" r="1.7" fill="#0c7c12"/><circle cx="926.0" cy="468.3" r="1.7" fill="#0c7c12"/><circle cx="926.0" cy="538.3" r="1.7" fill="#0c7c12"/><circle cx="1018.0" cy="521.3" r="1.7" fill="#0c7c12"/><circle cx="1018.0" cy="591.3" r="1.7" fill="#0c7c12"/><circle cx="1110.0" cy="574.3" r="1.7" fill="#0c7c12"/><circle cx="1110.0" cy="644.3" r="1.7" fill="#0c7c12"/><circle cx="1202.0" cy="627.3" r="1.7" fill="#0c7c12"/><circle cx="1202.0" cy="697.3" r="1.7" fill="#0c7c12"/><circle cx="834.0" cy="521.3" r="1.7" fill="#0c7c12"/><circle cx="834.0" cy="591.3" r="1.7" fill="#0c7c12"/><circle cx="926.0" cy="574.3" r="1.7" fill="#0c7c12"/><circle cx="926.0" cy="644.3" r="1.7" fill="#0c7c12"/><circle cx="1018.0" cy="627.3" r="1.7" fill="#0c7c12"/><circle cx="1018.0" cy="697.3" r="1.7" fill="#0c7c12"/><circle cx="864.7" cy="539.0" r="1.4" fill="#0c7c12"/><circle cx="956.7" cy="486.0" r="1.4" fill="#0c7c12"/><circle cx="895.3" cy="556.6" r="1.4" fill="#0c7c12"/><circle cx="987.3" cy="503.6" r="1.4" fill="#0c7c12"/><circle cx="1140.7" cy="486.0" r="1.4" fill="#0c7c12"/><circle cx="956.7" cy="592.0" r="1.4" fill="#0c7c12"/><circle cx="1048.7" cy="539.0" r="1.4" fill="#0c7c12"/><circle cx="1171.3" cy="503.6" r="1.4" fill="#0c7c12"/><circle cx="987.3" cy="609.6" r="1.4" fill="#0c7c12"/><circle cx="1079.3" cy="556.6" r="1.4" fill="#0c7c12"/><circle cx="1232.7" cy="539.0" r="1.4" fill="#0c7c12"/><circle cx="1140.7" cy="592.0" r="1.4" fill="#0c7c12"/><circle cx="1263.3" cy="556.6" r="1.4" fill="#0c7c12"/><circle cx="1171.3" cy="609.6" r="1.4" fill="#0c7c12"/><path d="M1018.0 415.3L1018.0 328.2" stroke="#000" stroke-width="1.0" /><path d="M1018.0 408.3L1018.0 335.2" stroke="#1c1c1c" stroke-width="7.300000000000001"/><path d="M1018.0 408.3L1018.0 335.2" stroke="#8fbdbd" stroke-width="5.4"/><path d="M1016.8 408.3L1016.8 335.2" stroke="#c6e4e4" stroke-width="1.84"/><path d="M1019.2 408.3L1019.2 335.2" stroke="#5f8d8d" stroke-width="1.62"/><path d="M967.9 395.3L1018.0 366.5" stroke="#000" stroke-width="1.25" /><path d="M1018.0 366.5L1068.1 395.3" stroke="#000" stroke-width="1.25" /><path d="M1018.0 424.1L926.0 468.3" stroke="#000" stroke-width="1.0" /><path d="M1009.9 428.0L935.0 464.0" stroke="#1c1c1c" stroke-width="4.9"/><path d="M1009.9 428.0L935.0 464.0" stroke="#b4dcdc" stroke-width="3"/><path d="M1009.6 427.4L934.7 463.4" stroke="#e4f6f6" stroke-width="1.02"/><path d="M1010.2 428.7L935.3 464.6" stroke="#5f8d8d" stroke-width="0.90"/><path d="M1018.0 424.1L1110.0 468.3" stroke="#000" stroke-width="1.0" /><path d="M1026.1 428.0L1101.0 464.0" stroke="#1c1c1c" stroke-width="4.9"/><path d="M1026.1 428.0L1101.0 464.0" stroke="#5f8c8c" stroke-width="3"/><path d="M1026.4 427.4L1101.3 463.4" stroke="#8fb5b5" stroke-width="1.02"/><path d="M1025.8 428.7L1100.7 464.6" stroke="#5f8d8d" stroke-width="0.90"/><path d="M967.9 395.3L1018.0 521.3" stroke="#000" stroke-width="1.0" /><path d="M970.2 400.9L1015.0 513.9" stroke="#1c1c1c" stroke-width="4.699999999999999"/><path d="M970.2 400.9L1015.0 513.9" stroke="#6f9c9c" stroke-width="2.8"/><path d="M970.7 400.7L1015.6 513.6" stroke="#a9cccc" stroke-width="0.95"/><path d="M969.6 401.1L1014.4 514.1" stroke="#5f8d8d" stroke-width="0.84"/><path d="M1068.1 395.3L1018.0 521.3" stroke="#000" stroke-width="1.0" /><path d="M1065.8 400.9L1021.0 513.9" stroke="#1c1c1c" stroke-width="4.699999999999999"/><path d="M1065.8 400.9L1021.0 513.9" stroke="#5f8c8c" stroke-width="2.8"/><path d="M1065.3 400.7L1020.4 513.6" stroke="#8fb5b5" stroke-width="0.95"/><path d="M1066.4 401.1L1021.6 514.1" stroke="#5f8d8d" stroke-width="0.84"/><path d="M967.9 395.3L1018.0 424.1" stroke="#000" stroke-width="1.25" /><path d="M1018.0 424.1L1068.1 395.3" stroke="#000" stroke-width="1.25" /><path d="M1000.9 338.0L1018.0 424.1" stroke="#000" stroke-width="1.0" /><path d="M1002.1 343.9L1016.4 416.3" stroke="#1c1c1c" stroke-width="4.699999999999999"/><path d="M1002.1 343.9L1016.4 416.3" stroke="#6f9c9c" stroke-width="2.8"/><path d="M1002.7 343.8L1017.0 416.2" stroke="#a9cccc" stroke-width="0.95"/><path d="M1001.4 344.0L1015.8 416.4" stroke="#5f8d8d" stroke-width="0.84"/><path d="M1035.1 338.0L1018.0 424.1" stroke="#000" stroke-width="1.0" /><path d="M1033.9 343.9L1019.6 416.3" stroke="#1c1c1c" stroke-width="4.699999999999999"/><path d="M1033.9 343.9L1019.6 416.3" stroke="#6f9c9c" stroke-width="2.8"/><path d="M1033.3 343.8L1019.0 416.2" stroke="#a9cccc" stroke-width="0.95"/><path d="M1034.6 344.0L1020.2 416.4" stroke="#5f8d8d" stroke-width="0.84"/><path d="M1018.0 347.8L967.9 395.3" stroke="#000" stroke-width="1.0" /><path d="M1014.4 351.2L972.3 391.2" stroke="#1c1c1c" stroke-width="5.1"/><path d="M1014.4 351.2L972.3 391.2" stroke="#b4dcdc" stroke-width="3.2"/><path d="M1013.9 350.7L971.8 390.7" stroke="#e4f6f6" stroke-width="1.09"/><path d="M1014.9 351.8L972.8 391.7" stroke="#5f8d8d" stroke-width="0.96"/><path d="M1018.0 347.8L1068.1 395.3" stroke="#000" stroke-width="1.0" /><path d="M1021.6 351.2L1063.7 391.2" stroke="#1c1c1c" stroke-width="5.1"/><path d="M1021.6 351.2L1063.7 391.2" stroke="#6f9c9c" stroke-width="3.2"/><path d="M1022.1 350.7L1064.2 390.7" stroke="#9cc4c4" stroke-width="1.09"/><path d="M1021.1 351.8L1063.2 391.7" stroke="#5f8d8d" stroke-width="0.96"/><path d="M1000.9 338.0L926.0 468.3" stroke="#000" stroke-width="1.0" /><path d="M993.9 350.1L931.5 458.8" stroke="#1c1c1c" stroke-width="8.1"/><path d="M993.9 350.1L931.5 458.8" stroke="#8fbdbd" stroke-width="6.2"/><path d="M992.7 349.5L930.3 458.1" stroke="#c6e4e4" stroke-width="2.11"/><path d="M995.2 350.9L932.7 459.5" stroke="#5f8d8d" stroke-width="1.86"/><path d="M1035.1 338.0L1110.0 468.3" stroke="#000" stroke-width="1.0" /><path d="M1042.1 350.1L1104.5 458.8" stroke="#1c1c1c" stroke-width="8.1"/><path d="M1042.1 350.1L1104.5 458.8" stroke="#8fbdbd" stroke-width="6.2"/><path d="M1043.3 349.5L1105.7 458.1" stroke="#c6e4e4" stroke-width="2.11"/><path d="M1040.8 350.9L1103.3 459.5" stroke="#5f8d8d" stroke-width="1.86"/><path d="M1018.0 347.8L1018.0 521.3" stroke="#000" stroke-width="1.0" /><path d="M1018.0 350.8L1018.0 513.3" stroke="#1c1c1c" stroke-width="8.1"/><path d="M1018.0 350.8L1018.0 513.3" stroke="#8fbdbd" stroke-width="6.2"/><path d="M1016.6 350.8L1016.6 513.3" stroke="#c6e4e4" stroke-width="2.11"/><path d="M1019.4 350.8L1019.4 513.3" stroke="#5f8d8d" stroke-width="1.86"/><rect x="1015.4" y="349" width="5.2" height="15" fill="#3f5a5a" stroke="#0c0c0c" stroke-width="0.8"/><rect x="1016.8" y="349.5" width="1.6" height="14" fill="#6f9494"/><path d="M1018.0 328.2L1000.9 338.0" stroke="#000" stroke-width="1.0" /><path d="M1016.3 329.2L1002.6 337.0" stroke="#1c1c1c" stroke-width="3.5"/><path d="M1016.3 329.2L1002.6 337.0" stroke="#9cc7c7" stroke-width="1.6"/><path d="M1018.0 328.2L1035.1 338.0" stroke="#000" stroke-width="1.0" /><path d="M1019.7 329.2L1033.4 337.0" stroke="#1c1c1c" stroke-width="3.5"/><path d="M1019.7 329.2L1033.4 337.0" stroke="#9cc7c7" stroke-width="1.6"/><path d="M1000.9 338.0L1018.0 347.8" stroke="#000" stroke-width="1.0" /><path d="M1002.6 339.0L1016.3 346.8" stroke="#1c1c1c" stroke-width="3.5"/><path d="M1002.6 339.0L1016.3 346.8" stroke="#9cc7c7" stroke-width="1.6"/><path d="M1035.1 338.0L1018.0 347.8" stroke="#000" stroke-width="1.0" /><path d="M1033.4 339.0L1019.7 346.8" stroke="#1c1c1c" stroke-width="3.5"/><path d="M1033.4 339.0L1019.7 346.8" stroke="#9cc7c7" stroke-width="1.6"/><ellipse cx="1018" cy="336.5" rx="2.9" ry="1.6" fill="#b4dcdc" stroke="#1c1c1c" stroke-width="0.6"/><circle cx="1018.0" cy="328.2" r="1.6" fill="#0c7c12"/><circle cx="1000.9" cy="338.0" r="1.6" fill="#0c7c12"/><circle cx="1035.1" cy="338.0" r="1.6" fill="#0c7c12"/><circle cx="1018.0" cy="347.8" r="1.6" fill="#0c7c12"/><polygon points="1029.5,707.5 1105.0,750.0 1101.5,752.5 1026.0,710.0" fill="#f3b4b4"/><polygon points="1101.5,752.5 1105.0,750.0 1105.0,807.0 1101.5,809.5" fill="#e8a4a4"/><polygon points="1026.0,710.0 1101.5,752.5 1101.5,809.5 1026.0,767.0" fill="#f8a3a3"/><polygon points="1072.0,764.0 1083.0,770.2 1083.0,800.0 1072.0,793.8" fill="#fff" stroke="#e6a0a0" stroke-width="0.8"/><polygon points="1072.0,764.0 1074.4,765.3 1074.4,793.3 1072.0,793.8" fill="#dba0a0"/><path d="M926.0 768.3L926.0 821.8" stroke="#000" stroke-width="1.0" /><rect x="924.8" y="774.3" width="2.4" height="41.5" fill="#2ab4ca" stroke="#0d4c58" stroke-width="0.7"/><path d="M926.0 822.4l-5.6 6.4h11.2zM918.0 828.8h16" fill="none" stroke="#1e9a1e" stroke-width="1.25"/><path d="M919.6 828.8l-1.6 3.6M922.2 828.8l-1.6 3.6M924.8 828.8l-1.6 3.6M927.4 828.8l-1.6 3.6M930.0 828.8l-1.6 3.6M932.6 828.8l-1.6 3.6" stroke="#1e9a1e" stroke-width="1.1"/><circle cx="926.0" cy="821.8" r="1.9" fill="#0c7c12"/><path d="M1018.0 821.3L1018.0 874.8" stroke="#000" stroke-width="1.0" /><rect x="1016.8" y="827.3" width="2.4" height="41.5" fill="#2ab4ca" stroke="#0d4c58" stroke-width="0.7"/><path d="M1018.0 875.4l-5.6 6.4h11.2zM1010.0 881.8h16" fill="none" stroke="#1e9a1e" stroke-width="1.25"/><path d="M1011.6 881.8l-1.6 3.6M1014.2 881.8l-1.6 3.6M1016.8 881.8l-1.6 3.6M1019.4 881.8l-1.6 3.6M1022.0 881.8l-1.6 3.6M1024.6 881.8l-1.6 3.6" stroke="#1e9a1e" stroke-width="1.1"/><circle cx="1018.0" cy="874.8" r="1.9" fill="#0c7c12"/><path d="M1018.0 768.3L1110.0 821.3" stroke="#e0861a" stroke-width="1.1" /><path d="M1110.0 821.9l-5.6 6.4h11.2zM1102.0 828.3h16" fill="none" stroke="#e0861a" stroke-width="1.25"/><path d="M1103.6 828.3l-1.6 3.6M1106.2 828.3l-1.6 3.6M1108.8 828.3l-1.6 3.6M1111.4 828.3l-1.6 3.6M1114.0 828.3l-1.6 3.6M1116.6 828.3l-1.6 3.6" stroke="#e0861a" stroke-width="1.1"/><circle cx="1110.0" cy="821.3" r="1.9" fill="#0c7c12"/><path d="M926.0 768.3L1018.0 697.3" stroke="#111" stroke-width="0.8" /><path d="M926.0 768.3L1002.8 724.0" stroke="#111" stroke-width="0.8" /><path d="M931.2 765.3L1002.8 724.0" stroke="#1a1408" stroke-width="3.5999999999999996"/><path d="M931.2 765.3L1002.8 724.0" stroke="#6a5220" stroke-width="1.7"/><path d="M930.8 764.6L1002.8 709.0" stroke="#120d04" stroke-width="3.9"/><path d="M930.8 764.6L1002.8 709.0" stroke="#5a4418" stroke-width="2.0"/><circle cx="941.4" cy="756.4" r="1.5" fill="#0c7c12"/><circle cx="956.7" cy="744.6" r="1.5" fill="#0c7c12"/><circle cx="956.7" cy="750.6" r="1.3" fill="#0c7c12"/><path d="M972.1 732.7L972.1 741.7" stroke="#2a1f0a" stroke-width="1.6" /><circle cx="972.1" cy="732.7" r="1.5" fill="#0c7c12"/><circle cx="972.1" cy="741.7" r="1.3" fill="#0c7c12"/><path d="M987.5 720.9L987.5 732.9" stroke="#2a1f0a" stroke-width="1.6" /><circle cx="987.5" cy="720.9" r="1.5" fill="#0c7c12"/><circle cx="987.5" cy="732.9" r="1.3" fill="#0c7c12"/><path d="M1002.8 709.0L1002.8 724.0" stroke="#2a1f0a" stroke-width="1.6" /><circle cx="1002.8" cy="709.0" r="1.5" fill="#0c7c12"/><circle cx="1002.8" cy="724.0" r="1.3" fill="#0c7c12"/><path d="M1002.8 709.0L987.5 732.9" stroke="#2a1f0a" stroke-width="1.3" /><path d="M987.5 720.9L972.1 741.7" stroke="#2a1f0a" stroke-width="1.2" /><circle cx="1018.0" cy="697.3" r="1.7" fill="#0c7c12"/><path d="M972.0 794.8L1064.0 723.8" stroke="#111" stroke-width="0.8" /><path d="M972.0 794.8L1048.8 750.5" stroke="#111" stroke-width="0.8" /><path d="M977.2 791.8L1048.8 750.5" stroke="#1a1408" stroke-width="3.5999999999999996"/><path d="M977.2 791.8L1048.8 750.5" stroke="#6a5220" stroke-width="1.7"/><path d="M976.8 791.1L1048.8 735.5" stroke="#120d04" stroke-width="3.9"/><path d="M976.8 791.1L1048.8 735.5" stroke="#5a4418" stroke-width="2.0"/><circle cx="987.4" cy="782.9" r="1.5" fill="#0c7c12"/><circle cx="1002.7" cy="771.1" r="1.5" fill="#0c7c12"/><circle cx="1002.7" cy="777.1" r="1.3" fill="#0c7c12"/><path d="M1018.1 759.2L1018.1 768.2" stroke="#2a1f0a" stroke-width="1.6" /><circle cx="1018.1" cy="759.2" r="1.5" fill="#0c7c12"/><circle cx="1018.1" cy="768.2" r="1.3" fill="#0c7c12"/><path d="M1033.5 747.4L1033.5 759.4" stroke="#2a1f0a" stroke-width="1.6" /><circle cx="1033.5" cy="747.4" r="1.5" fill="#0c7c12"/><circle cx="1033.5" cy="759.4" r="1.3" fill="#0c7c12"/><path d="M1048.8 735.5L1048.8 750.5" stroke="#2a1f0a" stroke-width="1.6" /><circle cx="1048.8" cy="735.5" r="1.5" fill="#0c7c12"/><circle cx="1048.8" cy="750.5" r="1.3" fill="#0c7c12"/><path d="M1048.8 735.5L1033.5 759.4" stroke="#2a1f0a" stroke-width="1.3" /><path d="M1033.5 747.4L1018.1 768.2" stroke="#2a1f0a" stroke-width="1.2" /><circle cx="1064.0" cy="723.8" r="1.7" fill="#0c7c12"/><path d="M1018.0 821.3L1110.0 750.3" stroke="#111" stroke-width="0.8" /><path d="M1018.0 821.3L1110.0 768.3" stroke="#111" stroke-width="0.8" /><path d="M1023.2 818.3L1094.8 777.0" stroke="#1a1408" stroke-width="3.5999999999999996"/><path d="M1023.2 818.3L1094.8 777.0" stroke="#6a5220" stroke-width="1.7"/><path d="M1022.8 817.6L1094.8 762.0" stroke="#120d04" stroke-width="3.9"/><path d="M1022.8 817.6L1094.8 762.0" stroke="#5a4418" stroke-width="2.0"/><circle cx="1033.4" cy="809.4" r="1.5" fill="#0c7c12"/><circle cx="1048.7" cy="797.6" r="1.5" fill="#0c7c12"/><circle cx="1048.7" cy="803.6" r="1.3" fill="#0c7c12"/><path d="M1064.1 785.7L1064.1 794.7" stroke="#2a1f0a" stroke-width="1.6" /><circle cx="1064.1" cy="785.7" r="1.5" fill="#0c7c12"/><circle cx="1064.1" cy="794.7" r="1.3" fill="#0c7c12"/><path d="M1079.5 773.9L1079.5 785.9" stroke="#2a1f0a" stroke-width="1.6" /><circle cx="1079.5" cy="773.9" r="1.5" fill="#0c7c12"/><circle cx="1079.5" cy="785.9" r="1.3" fill="#0c7c12"/><path d="M1094.8 762.0L1094.8 777.0" stroke="#2a1f0a" stroke-width="1.6" /><circle cx="1094.8" cy="762.0" r="1.5" fill="#0c7c12"/><circle cx="1094.8" cy="777.0" r="1.3" fill="#0c7c12"/><path d="M1094.8 762.0L1079.5 785.9" stroke="#2a1f0a" stroke-width="1.3" /><path d="M1079.5 773.9L1064.1 794.7" stroke="#2a1f0a" stroke-width="1.2" /><circle cx="1110.0" cy="750.3" r="1.7" fill="#0c7c12"/><circle cx="1110.0" cy="768.3" r="1.7" fill="#0c7c12"/><path d="M941.4 756.4L987.4 782.9" stroke="#000" stroke-width="1.0" /><path d="M945.7 758.9L983.0 780.4" stroke="#2a1c04" stroke-width="4.1"/><path d="M945.7 758.9L983.0 780.4" stroke="#b8860f" stroke-width="2.2"/><path d="M945.9 758.5L983.3 780.0" stroke="#e0b040" stroke-width="0.66"/><path d="M956.7 744.6L1002.7 771.1" stroke="#000" stroke-width="1.0" /><path d="M961.1 747.1L998.4 768.6" stroke="#2a1c04" stroke-width="4.1"/><path d="M961.1 747.1L998.4 768.6" stroke="#b8860f" stroke-width="2.2"/><path d="M961.3 746.6L998.6 768.1" stroke="#e0b040" stroke-width="0.66"/><path d="M972.1 732.7L1018.1 759.2" stroke="#000" stroke-width="1.0" /><path d="M976.4 735.2L1013.8 756.7" stroke="#2a1c04" stroke-width="4.1"/><path d="M976.4 735.2L1013.8 756.7" stroke="#b8860f" stroke-width="2.2"/><path d="M976.7 734.8L1014.0 756.3" stroke="#e0b040" stroke-width="0.66"/><path d="M987.5 720.9L1033.5 747.4" stroke="#000" stroke-width="1.0" /><path d="M991.8 723.4L1029.1 744.9" stroke="#2a1c04" stroke-width="4.1"/><path d="M991.8 723.4L1029.1 744.9" stroke="#b8860f" stroke-width="2.2"/><path d="M992.0 722.9L1029.4 744.4" stroke="#e0b040" stroke-width="0.66"/><path d="M1002.8 709.0L1048.8 735.5" stroke="#000" stroke-width="1.0" /><path d="M1007.2 711.5L1044.5 733.0" stroke="#2a1c04" stroke-width="4.1"/><path d="M1007.2 711.5L1044.5 733.0" stroke="#b8860f" stroke-width="2.2"/><path d="M1007.4 711.1L1044.7 732.6" stroke="#e0b040" stroke-width="0.66"/><path d="M987.4 782.9L1033.4 809.4" stroke="#000" stroke-width="1.0" /><path d="M991.7 785.4L1029.0 806.9" stroke="#2a1c04" stroke-width="4.1"/><path d="M991.7 785.4L1029.0 806.9" stroke="#b8860f" stroke-width="2.2"/><path d="M991.9 785.0L1029.3 806.5" stroke="#e0b040" stroke-width="0.66"/><path d="M1002.7 771.1L1048.7 797.6" stroke="#000" stroke-width="1.0" /><path d="M1007.1 773.6L1044.4 795.1" stroke="#2a1c04" stroke-width="4.1"/><path d="M1007.1 773.6L1044.4 795.1" stroke="#b8860f" stroke-width="2.2"/><path d="M1007.3 773.1L1044.6 794.6" stroke="#e0b040" stroke-width="0.66"/><path d="M1018.1 759.2L1064.1 785.7" stroke="#000" stroke-width="1.0" /><path d="M1022.4 761.7L1059.8 783.2" stroke="#2a1c04" stroke-width="4.1"/><path d="M1022.4 761.7L1059.8 783.2" stroke="#b8860f" stroke-width="2.2"/><path d="M1022.7 761.3L1060.0 782.8" stroke="#e0b040" stroke-width="0.66"/><path d="M1033.5 747.4L1079.5 773.9" stroke="#000" stroke-width="1.0" /><path d="M1037.8 749.9L1075.1 771.4" stroke="#2a1c04" stroke-width="4.1"/><path d="M1037.8 749.9L1075.1 771.4" stroke="#b8860f" stroke-width="2.2"/><path d="M1038.0 749.4L1075.4 770.9" stroke="#e0b040" stroke-width="0.66"/><path d="M1048.8 735.5L1094.8 762.0" stroke="#000" stroke-width="1.0" /><path d="M1053.2 738.0L1090.5 759.5" stroke="#2a1c04" stroke-width="4.1"/><path d="M1053.2 738.0L1090.5 759.5" stroke="#b8860f" stroke-width="2.2"/><path d="M1053.4 737.6L1090.7 759.1" stroke="#e0b040" stroke-width="0.66"/><path d="M926.0 768.3L972.0 794.8" stroke="#000" stroke-width="1.0" /><path d="M932.9 772.3L965.1 790.8" stroke="#5a2010" stroke-width="3.9"/><path d="M932.9 772.3L965.1 790.8" stroke="#e8704a" stroke-width="2.0"/><path d="M933.2 771.9L965.3 790.4" stroke="#f6a080" stroke-width="0.76"/><path d="M972.0 794.8L1018.0 821.3" stroke="#000" stroke-width="1.0" /><path d="M978.9 798.8L1011.1 817.3" stroke="#5a2010" stroke-width="3.9"/><path d="M978.9 798.8L1011.1 817.3" stroke="#e8704a" stroke-width="2.0"/><path d="M979.2 798.4L1011.3 816.9" stroke="#f6a080" stroke-width="0.76"/><circle cx="926.0" cy="768.3" r="1.7" fill="#0c7c12"/><circle cx="972.0" cy="794.8" r="1.7" fill="#0c7c12"/><circle cx="1018.0" cy="821.3" r="1.7" fill="#0c7c12"/><path d="M1294.0 715.9l-5.6 6.4h11.2zM1286.0 722.3h16" fill="none" stroke="#e0861a" stroke-width="1.25"/><path d="M1287.6 722.3l-1.6 3.6M1290.2 722.3l-1.6 3.6M1292.8 722.3l-1.6 3.6M1295.4 722.3l-1.6 3.6M1298.0 722.3l-1.6 3.6M1300.6 722.3l-1.6 3.6" stroke="#e0861a" stroke-width="1.1"/><circle cx="1294.0" cy="715.3" r="1.9" fill="#0c7c12"/><path d="M1202.0 768.9l-5.6 6.4h11.2zM1194.0 775.3h16" fill="none" stroke="#e0861a" stroke-width="1.25"/><path d="M1195.6 775.3l-1.6 3.6M1198.2 775.3l-1.6 3.6M1200.8 775.3l-1.6 3.6M1203.4 775.3l-1.6 3.6M1206.0 775.3l-1.6 3.6M1208.6 775.3l-1.6 3.6" stroke="#e0861a" stroke-width="1.1"/><circle cx="1202.0" cy="768.3" r="1.9" fill="#0c7c12"/><polygon points="1213.0,697.0 1286.2,656.5 1286.2,713.0 1213.0,755.5" fill="#8a8a8a" fill-opacity="0.93"/><polygon points="1209.2,698.6 1213.0,697.0 1213.0,755.5 1209.2,757.1" fill="#c9c9c9"/><polygon points="1209.2,698.6 1282.4,655.5 1286.2,656.5 1213.0,697.0" fill="#d4d4d4"/><polygon points="1224.6,715.3 1233.8,710.1 1233.8,730.4 1224.6,735.7" fill="#fff" stroke="#bdbdbd" stroke-width="0.8"/><polygon points="1224.6,715.3 1226.6,716.1 1226.6,735.1 1224.6,735.7" fill="#b0b0b0"/><polygon points="1245.0,703.8 1254.0,698.7 1254.0,718.8 1245.0,724.0" fill="#fff" stroke="#bdbdbd" stroke-width="0.8"/><polygon points="1245.0,703.8 1247.0,704.6 1247.0,723.4 1245.0,724.0" fill="#b0b0b0"/><polygon points="1265.0,692.5 1274.5,687.1 1274.5,707.0 1265.0,712.5" fill="#fff" stroke="#bdbdbd" stroke-width="0.8"/><polygon points="1265.0,692.5 1267.0,693.3 1267.0,711.9 1265.0,712.5" fill="#b0b0b0"/></g></svg>
<svg class="b" style="left:0px;top:0px;" width="1922" height="1042" viewBox="0 0 1922 1042"><rect x="565.5" y="292.5" width="919" height="688" fill="none" stroke="#000" stroke-width="1"/><path d="M633.5 293V360.5H566" fill="none" stroke="#777" stroke-width="1"/><g stroke="#333" stroke-width="0.8" fill="none"><path d="M599.9 317.1L612.4 324.4V337L599.9 344.7L587.6 337V324.4Z"/><path d="M587.6 324.4L599.9 331.3L612.4 324.4M599.9 331.3V344.7" stroke="#555"/></g><path d="M599.9 331.3V309M599.9 331.3L580.7 342.4M599.9 331.3L619.1 342.4" stroke="#111" stroke-width="1.3"/><rect x="597.6999999999999" y="329.1" width="4.4" height="4.4" fill="#ffff00"/><rect x="598.6999999999999" y="307.8" width="2.4" height="2.4" fill="#0a8a0a"/><rect x="579.5" y="341.2" width="2.4" height="2.4" fill="#0a8a0a"/><rect x="617.9" y="341.2" width="2.4" height="2.4" fill="#0a8a0a"/><text x="599.9" y="304.4" font-size="8.5" text-anchor="middle" fill="#111">Y</text><text x="574.4" y="346.8" font-size="8.5" text-anchor="middle" fill="#111">Z</text><text x="625.6" y="346.8" font-size="8.5" text-anchor="middle" fill="#111">X</text><path d="M565.5 925.5H1484.5M682.5 925.5V980.5M906.5 925.5V980.5M1260.5 925.5V980.5M682.5 943.5H906.5M682.5 962.5H906.5M1260.5 943.5H1484.5M1260.5 962.5H1484.5" stroke="#000" stroke-width="1" fill="none"/><rect x="568" y="927.2" width="10" height="36.6" fill="#0d5a96"/><rect x="580.2" y="935" width="11.8" height="28.8" fill="#0d5a96"/><rect x="594.2" y="941.2" width="12" height="22.6" fill="#0d5a96"/></svg>
<span class="t" style="left:606.8px;top:936.7px;font-size:32px;color:#0d5a96;transform:scaleX(0.9418);font-weight:bold;-webkit-text-stroke:0.9px #0d5a96;">RISA</span>
<span class="t" style="left:598.2px;top:967.5px;font-size:6.5px;color:#8a8a8a;transform:scaleX(0.9516);">A NEMETSCHEK COMPANY</span>
<span class="t" style="left:688.2px;top:927.8px;font-size:12px;color:#111;transform:scaleX(1.0000);">RISA Technologies</span>
<span class="t" style="left:1048.2px;top:927.8px;font-size:12px;color:#111;transform:scaleX(1.0000);">Sample Model</span>
<span class="t" style="left:1264.3px;top:927.8px;font-size:12px;color:#111;transform:scaleX(1.0000);">SK-1</span>
<span class="t" style="left:1264.3px;top:945.6px;font-size:12px;color:#111;transform:scaleX(1.0000);">Aug 10, 2023 at 03:59 PM</span>
<span class="t" style="left:1264.3px;top:964.2px;font-size:12px;color:#111;transform:scaleX(1.0000);">RISA-3D Sample Model.r3d</span>
<div class="b" style="left:0px;top:0px;width:1922px;height:1042px;border:1px solid #9a9a9a;pointer-events:none;z-index:50"></div>
</body></html>
